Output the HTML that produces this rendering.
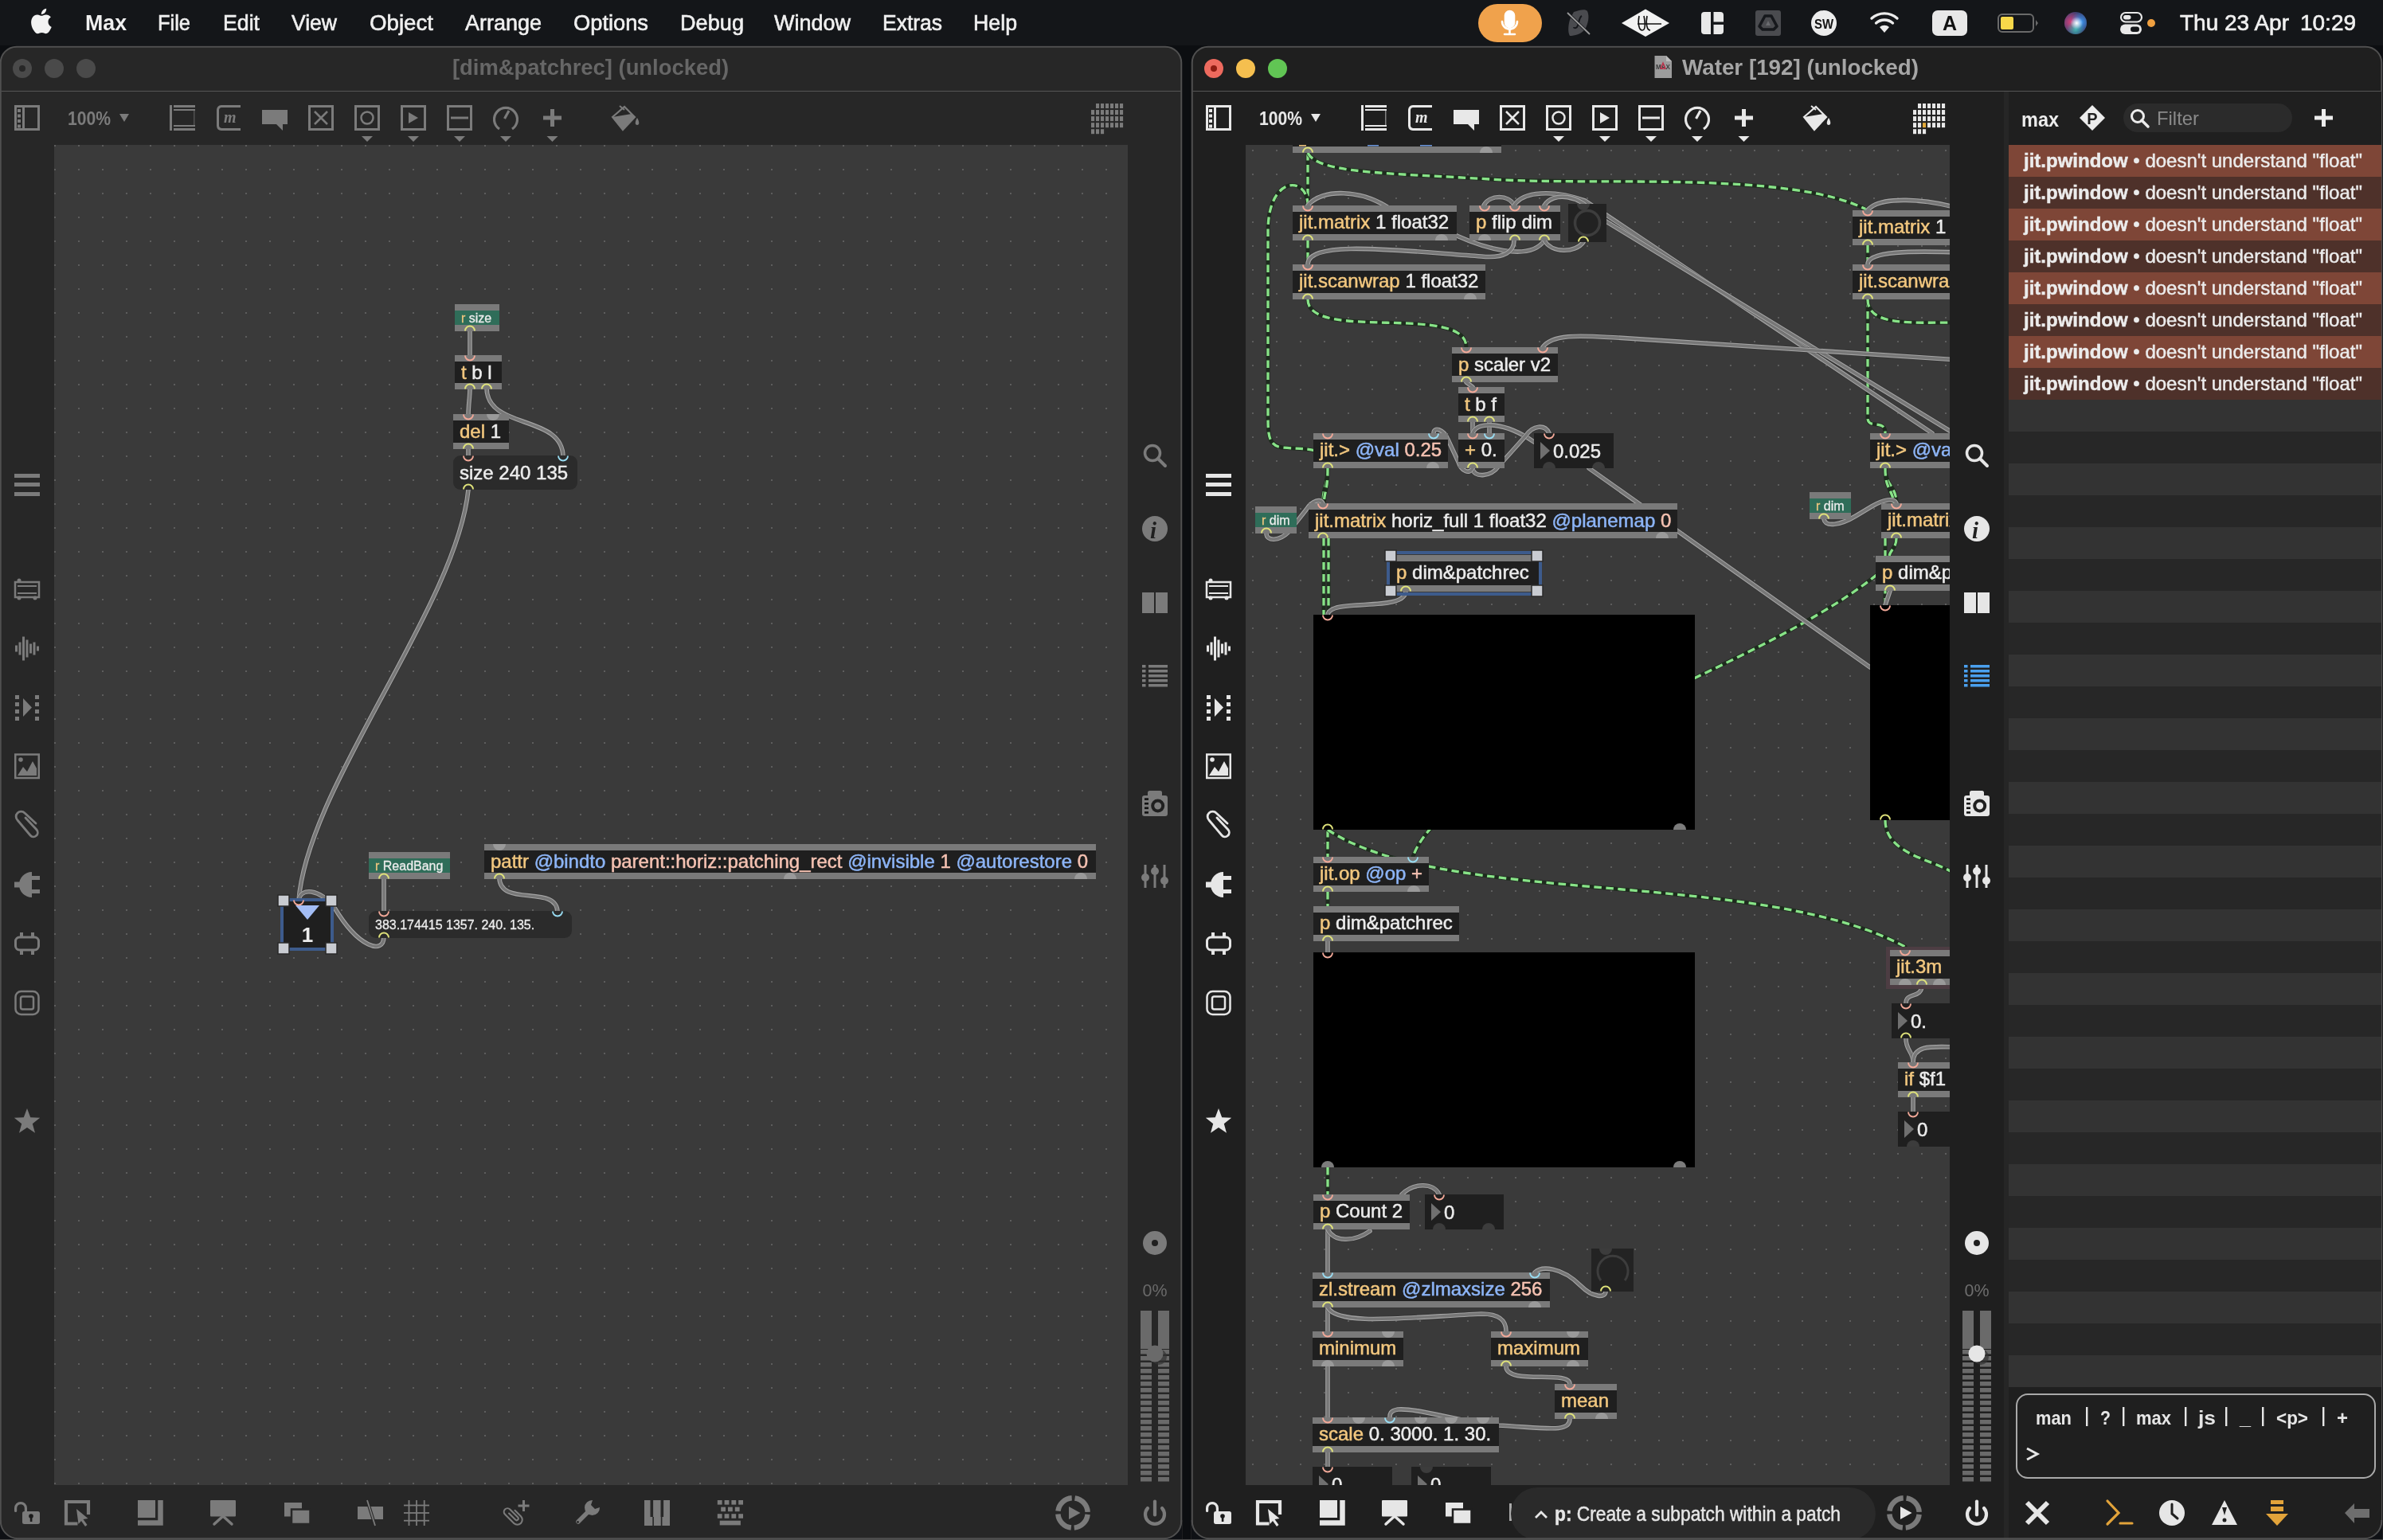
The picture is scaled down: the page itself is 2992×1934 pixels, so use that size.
<!DOCTYPE html>
<html><head><meta charset="utf-8"><style>
html,body{margin:0;padding:0;width:2992px;height:1934px;overflow:hidden;background:#0f1115;}
svg{display:block;font-family:"Liberation Sans", sans-serif;will-change:transform;}
</style></head><body>
<svg width="2992" height="1934" viewBox="0 0 2992 1934">

<rect x="0" y="0" width="2992" height="1934" fill="#0c0e11"/>
<rect x="0" y="0" width="2992" height="57" fill="#141619"/>
<g transform="translate(36.2,10.8) scale(1.31)" fill="#f2f2f2"><path d="M12.152 6.896c-.948 0-2.415-1.078-3.96-1.040-2.04.027-3.91 1.183-4.961 3.014-2.117 3.675-.546 9.103 1.519 12.090 1.013 1.454 2.208 3.090 3.792 3.039 1.520-.065 2.090-.987 3.935-.987 1.831 0 2.350.987 3.960.948 1.637-.026 2.676-1.480 3.676-2.948 1.156-1.688 1.636-3.325 1.662-3.415-.039-.013-3.182-1.221-3.220-4.857-.026-3.040 2.480-4.494 2.597-4.559-1.429-2.090-3.623-2.324-4.390-2.376-2-.156-3.675 1.090-4.610 1.090zM15.530 3.830c.843-1.012 1.400-2.427 1.245-3.830-1.207.052-2.662.805-3.532 1.818-.780.896-1.454 2.338-1.273 3.714 1.338.104 2.715-.688 3.559-1.701"/></g>
<text x="107" y="38" font-size="27" fill="#f0f0f0" font-weight="bold" textLength="52" lengthAdjust="spacingAndGlyphs" >Max</text>
<text x="198" y="38" font-size="27" fill="#f0f0f0" textLength="41" lengthAdjust="spacingAndGlyphs" stroke="#f0f0f0" stroke-width="0.6">File</text>
<text x="280" y="38" font-size="27" fill="#f0f0f0" textLength="46" lengthAdjust="spacingAndGlyphs" stroke="#f0f0f0" stroke-width="0.6">Edit</text>
<text x="366" y="38" font-size="27" fill="#f0f0f0" textLength="57" lengthAdjust="spacingAndGlyphs" stroke="#f0f0f0" stroke-width="0.6">View</text>
<text x="464" y="38" font-size="27" fill="#f0f0f0" textLength="80" lengthAdjust="spacingAndGlyphs" stroke="#f0f0f0" stroke-width="0.6">Object</text>
<text x="584" y="38" font-size="27" fill="#f0f0f0" textLength="96" lengthAdjust="spacingAndGlyphs" stroke="#f0f0f0" stroke-width="0.6">Arrange</text>
<text x="720" y="38" font-size="27" fill="#f0f0f0" textLength="94" lengthAdjust="spacingAndGlyphs" stroke="#f0f0f0" stroke-width="0.6">Options</text>
<text x="854" y="38" font-size="27" fill="#f0f0f0" textLength="80" lengthAdjust="spacingAndGlyphs" stroke="#f0f0f0" stroke-width="0.6">Debug</text>
<text x="972" y="38" font-size="27" fill="#f0f0f0" textLength="96" lengthAdjust="spacingAndGlyphs" stroke="#f0f0f0" stroke-width="0.6">Window</text>
<text x="1108" y="38" font-size="27" fill="#f0f0f0" textLength="75" lengthAdjust="spacingAndGlyphs" stroke="#f0f0f0" stroke-width="0.6">Extras</text>
<text x="1222" y="38" font-size="27" fill="#f0f0f0" textLength="55" lengthAdjust="spacingAndGlyphs" stroke="#f0f0f0" stroke-width="0.6">Help</text>
<rect x="1856" y="5" width="80" height="48" rx="24" fill="#f0a24c"/>
<g fill="none" stroke="#ffffff" stroke-width="2.6" stroke-linecap="round"><rect x="1890" y="14" width="11" height="20" rx="5.5" fill="#ffffff"/><path d="M1886,27 A9.5,9.5 0 0 0 1905,27"/><path d="M1895.5,37 V43 M1889,43 H1902"/></g>
<path d="M1976,15 C1984,12 1991,11 1993,14 C1996,20 1994,30 1990,37 C1985,43 1977,45 1971,45 C1968,40 1969,30 1972,22 Z" fill="#4a4b4f"/><path d="M1986,20 C1982,22 1983,30 1980,34 C1978,36 1976,35 1976,34" fill="none" stroke="#16181c" stroke-width="2"/><path d="M1968,16 L1996,43" stroke="#16181c" stroke-width="3.5"/><path d="M1968,16 L1996,43" stroke="#9a9a9a" stroke-width="1.8"/>
<path d="M2036,29 L2066,11.5 L2096,29 L2066,46 Z" fill="#f2f2f2"/><path d="M2058,20 C2056,30 2058,38 2062,38 C2066,38 2066,30 2064,20 M2068,20 C2066,30 2068,38 2072,38 M2056,30 H2086" fill="none" stroke="#111" stroke-width="1.6"/>
<rect x="2136" y="15" width="28" height="28" rx="4" fill="#e8e8e8"/><rect x="2148" y="15" width="3.5" height="28" fill="#141619"/><rect x="2150" y="27.5" width="14" height="3.4" fill="#141619"/>
<rect x="2204" y="13" width="32" height="32" rx="3" fill="#4a4b4f"/><path d="M2216,20 H2224 L2231,33 L2227,37 H2213 L2209,33 Z" fill="none" stroke="#16181c" stroke-width="3.6" stroke-linejoin="round"/><path d="M2217,32 L2220,26 L2223,32 Z" fill="#6a6b6f"/>
<circle cx="2290" cy="29" r="16" fill="#ececec"/>
<text x="2290" y="36" font-size="17" fill="#111" font-weight="bold" text-anchor="middle" textLength="24" lengthAdjust="spacingAndGlyphs" >SW</text>
<g fill="none" stroke="#ececec" stroke-width="3.4" stroke-linecap="round"><path d="M2350,23 A24,24 0 0 1 2382,23"/><path d="M2355.5,29 A16,16 0 0 1 2376.5,29"/></g><path d="M2360,34 A9,9 0 0 1 2372,34 L2366,41 Z" fill="#ececec"/>
<rect x="2426" y="13" width="44" height="32" rx="7" fill="#e8e8e8"/>
<text x="2448" y="38" font-size="25" fill="#111" font-weight="bold" text-anchor="middle" >A</text>
<rect x="2509" y="18" width="44" height="22" rx="5" fill="none" stroke="#6a6a6a" stroke-width="2"/><rect x="2512" y="21" width="16" height="16" rx="2" fill="#f7d84a"/><path d="M2556,25 L2559,29 L2556,33 Z" fill="#6a6a6a"/>
<defs><radialGradient id="sr1" cx="0.3" cy="0.45" r="0.5"><stop offset="0" stop-color="#e0407a" stop-opacity="0.95"/><stop offset="1" stop-color="#e0407a" stop-opacity="0"/></radialGradient><radialGradient id="sr2" cx="0.72" cy="0.45" r="0.45"><stop offset="0" stop-color="#3aa0ff" stop-opacity="0.95"/><stop offset="1" stop-color="#3aa0ff" stop-opacity="0"/></radialGradient><radialGradient id="sr3" cx="0.5" cy="0.78" r="0.4"><stop offset="0" stop-color="#40d0c0" stop-opacity="0.8"/><stop offset="1" stop-color="#40d0c0" stop-opacity="0"/></radialGradient><radialGradient id="sr4" cx="0.55" cy="0.5" r="0.28"><stop offset="0" stop-color="#ffffff"/><stop offset="1" stop-color="#ffffff" stop-opacity="0"/></radialGradient></defs><circle cx="2606" cy="29" r="14" fill="#3a3f70"/><circle cx="2606" cy="29" r="14" fill="url(#sr1)"/><circle cx="2606" cy="29" r="14" fill="url(#sr2)"/><circle cx="2606" cy="29" r="14" fill="url(#sr3)"/><circle cx="2606" cy="29" r="14" fill="url(#sr4)"/>
<rect x="2663" y="16" width="26" height="11.5" rx="5.75" fill="none" stroke="#e8e8e8" stroke-width="2.2"/><rect x="2666" y="19" width="9.5" height="5.5" rx="2.75" fill="#e8e8e8"/><rect x="2662" y="30.5" width="27" height="12.5" rx="6.25" fill="#e8e8e8"/><rect x="2675" y="33.5" width="11" height="6.5" rx="3.25" fill="#141619"/><circle cx="2701" cy="29" r="5" fill="#f0a040"/>
<text x="2737" y="38" font-size="27" fill="#f0f0f0" textLength="137" lengthAdjust="spacingAndGlyphs" stroke="#f0f0f0" stroke-width="0.6">Thu 23 Apr</text>
<text x="2888" y="38" font-size="27" fill="#f0f0f0" textLength="70" lengthAdjust="spacingAndGlyphs" stroke="#f0f0f0" stroke-width="0.6">10:29</text>
<rect x="0.75" y="58.75" width="1482.5" height="1904" rx="20" fill="#272727" stroke="#505050" stroke-width="2"/>
<rect x="1.5" y="114" width="1481" height="1" fill="#565656"/>
<rect x="1496.75" y="58.75" width="1493.5" height="1904" rx="20" fill="#1f1f1f" stroke="#505050" stroke-width="2"/>
<rect x="1497.5" y="114" width="1492" height="1" fill="#565656"/>
<defs><pattern id="dotsL" x="68" y="182" width="30" height="30" patternUnits="userSpaceOnUse"><rect x="0" y="0" width="2" height="2" fill="#5d5d5d"/></pattern><pattern id="dotsR" x="1572" y="188" width="30" height="30" patternUnits="userSpaceOnUse"><rect x="0" y="0" width="2" height="2" fill="#5d5d5d"/></pattern><clipPath id="clipL"><rect x="68" y="182" width="1348" height="1683"/></clipPath><clipPath id="clipR"><rect x="1564" y="182" width="884" height="1683"/></clipPath></defs>
<g clip-path="url(#clipL)">
<rect x="68" y="182" width="1348" height="1683" fill="#3a3a3a"/>
<rect x="68" y="182" width="1348" height="1683" fill="url(#dotsL)"/>
<path d="M590,414 L590,448" fill="none" stroke="#2e2e2e" stroke-width="7" stroke-linecap="round" opacity="0.35"/>
<path d="M590,414 L590,448" fill="none" stroke="#a4a4a4" stroke-width="5.6" stroke-linecap="round"/>
<path d="M590,414 L590,448" fill="none" stroke="#777777" stroke-width="3.4" stroke-linecap="round"/>
<path d="M590,487 C590,500 588,508 588,522" fill="none" stroke="#2e2e2e" stroke-width="7" stroke-linecap="round" opacity="0.35"/>
<path d="M590,487 C590,500 588,508 588,522" fill="none" stroke="#a4a4a4" stroke-width="5.6" stroke-linecap="round"/>
<path d="M590,487 C590,500 588,508 588,522" fill="none" stroke="#777777" stroke-width="3.4" stroke-linecap="round"/>
<path d="M611,487 C611,540 707,520 707,574" fill="none" stroke="#2e2e2e" stroke-width="7" stroke-linecap="round" opacity="0.35"/>
<path d="M611,487 C611,540 707,520 707,574" fill="none" stroke="#a4a4a4" stroke-width="5.6" stroke-linecap="round"/>
<path d="M611,487 C611,540 707,520 707,574" fill="none" stroke="#777777" stroke-width="3.4" stroke-linecap="round"/>
<path d="M588,562 L588,574" fill="none" stroke="#2e2e2e" stroke-width="7" stroke-linecap="round" opacity="0.35"/>
<path d="M588,562 L588,574" fill="none" stroke="#a4a4a4" stroke-width="5.6" stroke-linecap="round"/>
<path d="M588,562 L588,574" fill="none" stroke="#777777" stroke-width="3.4" stroke-linecap="round"/>
<path d="M588,615 C573,762 386,987 375,1131" fill="none" stroke="#2e2e2e" stroke-width="7" stroke-linecap="round" opacity="0.35"/>
<path d="M588,615 C573,762 386,987 375,1131" fill="none" stroke="#a4a4a4" stroke-width="5.6" stroke-linecap="round"/>
<path d="M588,615 C573,762 386,987 375,1131" fill="none" stroke="#777777" stroke-width="3.4" stroke-linecap="round"/>
<path d="M482,1176 C482,1200 450,1190 420,1140 C400,1115 378,1115 375,1130" fill="none" stroke="#2e2e2e" stroke-width="7" stroke-linecap="round" opacity="0.35"/>
<path d="M482,1176 C482,1200 450,1190 420,1140 C400,1115 378,1115 375,1130" fill="none" stroke="#a4a4a4" stroke-width="5.6" stroke-linecap="round"/>
<path d="M482,1176 C482,1200 450,1190 420,1140 C400,1115 378,1115 375,1130" fill="none" stroke="#777777" stroke-width="3.4" stroke-linecap="round"/>
<path d="M482,1102 L482,1146" fill="none" stroke="#2e2e2e" stroke-width="7" stroke-linecap="round" opacity="0.35"/>
<path d="M482,1102 L482,1146" fill="none" stroke="#a4a4a4" stroke-width="5.6" stroke-linecap="round"/>
<path d="M482,1102 L482,1146" fill="none" stroke="#777777" stroke-width="3.4" stroke-linecap="round"/>
<path d="M627,1102 C627,1140 700,1110 700,1146" fill="none" stroke="#2e2e2e" stroke-width="7" stroke-linecap="round" opacity="0.35"/>
<path d="M627,1102 C627,1140 700,1110 700,1146" fill="none" stroke="#a4a4a4" stroke-width="5.6" stroke-linecap="round"/>
<path d="M627,1102 C627,1140 700,1110 700,1146" fill="none" stroke="#777777" stroke-width="3.4" stroke-linecap="round"/>
<rect x="571" y="382" width="56" height="34" fill="#7a7a7a"/>
<rect x="571" y="390" width="56" height="18" fill="#2f6d59"/>
<text x="579" y="405.0" font-size="16" stroke-width="0.3"><tspan fill="#f2c77f" stroke="#f2c77f">r</tspan><tspan fill="#ececec" stroke="#ececec"> size</tspan></text>
<path d="M584,415.5 A6,6 0 0 1 596,415.5" fill="none" stroke="#dfe27a" stroke-width="1.9"/>
<rect x="571" y="446" width="59" height="43" fill="#7a7a7a"/>
<rect x="571" y="454" width="59" height="27" fill="#1f1f1f"/>
<text x="579" y="475.5" font-size="24" stroke-width="0.5"><tspan fill="#f2c77f" stroke="#f2c77f">t</tspan><tspan fill="#ececec" stroke="#ececec"> b l</tspan></text>
<path d="M584,446.5 A6,6 0 0 0 596,446.5" fill="none" stroke="#f2a898" stroke-width="1.9"/>
<path d="M584,488.5 A6,6 0 0 1 596,488.5" fill="none" stroke="#dfe27a" stroke-width="1.9"/>
<path d="M605,488.5 A6,6 0 0 1 617,488.5" fill="none" stroke="#dfe27a" stroke-width="1.9"/>
<rect x="569" y="520" width="70" height="44" fill="#7a7a7a"/>
<rect x="569" y="528" width="70" height="28" fill="#1f1f1f"/>
<text x="577" y="550" font-size="24" stroke-width="0.5"><tspan fill="#f2c77f" stroke="#f2c77f">del</tspan><tspan fill="#ececec" stroke="#ececec"> 1</tspan></text>
<path d="M582,520.5 A6,6 0 0 0 594,520.5" fill="none" stroke="#f2a898" stroke-width="1.9"/>
<path d="M611,520 A8,8 0 0 0 627,520 Z" fill="#a6a6a6" opacity="0.75"/>
<path d="M582,563.5 A6,6 0 0 1 594,563.5" fill="none" stroke="#dfe27a" stroke-width="1.9"/>
<rect x="569" y="572" width="156" height="43" rx="9" fill="#2b2b2b"/>
<text x="577" y="602" font-size="24" fill="#ececec" stroke="#ececec" stroke-width="0.5">size 240 135</text>
<path d="M582,572.5 A6,6 0 0 0 594,572.5" fill="none" stroke="#f2a898" stroke-width="1.9"/>
<path d="M701,572.5 A6,6 0 0 0 713,572.5" fill="none" stroke="#98dcf2" stroke-width="1.9"/>
<path d="M582,614.5 A6,6 0 0 1 594,614.5" fill="none" stroke="#dfe27a" stroke-width="1.9"/>
<rect x="463" y="1070" width="102" height="34" fill="#7a7a7a"/>
<rect x="463" y="1078" width="102" height="18" fill="#2f6d59"/>
<text x="471" y="1093.0" font-size="16" stroke-width="0.3"><tspan fill="#f2c77f" stroke="#f2c77f">r</tspan><tspan fill="#ececec" stroke="#ececec"> ReadBang</tspan></text>
<path d="M476,1103.5 A6,6 0 0 1 488,1103.5" fill="none" stroke="#dfe27a" stroke-width="1.9"/>
<rect x="463" y="1144" width="255" height="34" rx="9" fill="#2b2b2b"/>
<text x="471" y="1167" font-size="16" fill="#ececec" stroke="#ececec" stroke-width="0.3">383.174415 1357. 240. 135.</text>
<path d="M476,1144.5 A6,6 0 0 0 488,1144.5" fill="none" stroke="#f2a898" stroke-width="1.9"/>
<path d="M694,1144.5 A6,6 0 0 0 706,1144.5" fill="none" stroke="#98dcf2" stroke-width="1.9"/>
<path d="M476,1177.5 A6,6 0 0 1 488,1177.5" fill="none" stroke="#dfe27a" stroke-width="1.9"/>
<rect x="608" y="1060" width="768" height="44" fill="#7a7a7a"/><rect x="608" y="1068" width="768" height="28" fill="#1f1f1f"/>
<text x="616" y="1090" font-size="24" stroke-width="0.5" textLength="750" lengthAdjust="spacingAndGlyphs"><tspan fill="#f2c77f" stroke="#f2c77f">pattr</tspan><tspan fill="#8db5f7" stroke="#8db5f7"> @bindto</tspan><tspan fill="#f5c2b2" stroke="#f5c2b2"> parent::horiz::patching_rect</tspan><tspan fill="#8db5f7" stroke="#8db5f7"> @invisible</tspan><tspan fill="#f5c2b2" stroke="#f5c2b2"> 1</tspan><tspan fill="#8db5f7" stroke="#8db5f7"> @autorestore</tspan><tspan fill="#f5c2b2" stroke="#f5c2b2"> 0</tspan></text>
<path d="M619,1060 A8,8 0 0 0 635,1060 Z" fill="#a6a6a6" opacity="0.75"/>
<path d="M621,1103.5 A6,6 0 0 1 633,1103.5" fill="none" stroke="#dfe27a" stroke-width="1.9"/>
<path d="M984,1104 A8,8 0 0 1 1000,1104 Z" fill="#a6a6a6" opacity="0.75"/>
<path d="M1349,1104 A8,8 0 0 1 1365,1104 Z" fill="#a6a6a6" opacity="0.75"/>
<rect x="354" y="1130" width="63" height="62" fill="#1f1f1f" stroke="#3d5b8c" stroke-width="4"/>
<path d="M371,1137 L401,1137 L386,1155 Z" fill="#a3bdf5"/>
<text x="386" y="1183" font-size="26" fill="#ececec" font-weight="bold" text-anchor="middle" >1</text>
<path d="M369,1130.5 A6,6 0 0 0 381,1130.5" fill="none" stroke="#f2a898" stroke-width="1.9"/>
<rect x="349" y="1124" width="14" height="14" fill="#c9ccd2" stroke="#2a2a2a" stroke-width="1.5"/>
<rect x="409" y="1124" width="14" height="14" fill="#c9ccd2" stroke="#2a2a2a" stroke-width="1.5"/>
<rect x="349" y="1184" width="14" height="14" fill="#c9ccd2" stroke="#2a2a2a" stroke-width="1.5"/>
<rect x="409" y="1184" width="14" height="14" fill="#c9ccd2" stroke="#2a2a2a" stroke-width="1.5"/>
</g>
<g clip-path="url(#clipR)">
<rect x="1564" y="182" width="884" height="1683" fill="#3a3a3a"/>
<rect x="1564" y="182" width="884" height="1683" fill="url(#dotsR)"/>
<path d="M1642,192 L1642,258" fill="none" stroke="#1e2b1e" stroke-width="5" stroke-linecap="round"/>
<path d="M1642,192 L1642,258" fill="none" stroke="#88e388" stroke-width="3.3" stroke-dasharray="9.5 5.5"/>
<path d="M1642,192 C1655,218 1740,217 1875,225.3 S2250,214 2345,264" fill="none" stroke="#1e2b1e" stroke-width="5" stroke-linecap="round"/>
<path d="M1642,192 C1655,218 1740,217 1875,225.3 S2250,214 2345,264" fill="none" stroke="#88e388" stroke-width="3.3" stroke-dasharray="9.5 5.5"/>
<path d="M1667,588 C1667,560 1640,565 1610,562 C1592,560 1592,545 1592,520 L1592,290 C1592,220 1642,220 1642,258" fill="none" stroke="#1e2b1e" stroke-width="5" stroke-linecap="round"/>
<path d="M1667,588 C1667,560 1640,565 1610,562 C1592,560 1592,545 1592,520 L1592,290 C1592,220 1642,220 1642,258" fill="none" stroke="#88e388" stroke-width="3.3" stroke-dasharray="9.5 5.5"/>
<path d="M1642,302 L1642,332" fill="none" stroke="#1e2b1e" stroke-width="5" stroke-linecap="round"/>
<path d="M1642,302 L1642,332" fill="none" stroke="#88e388" stroke-width="3.3" stroke-dasharray="9.5 5.5"/>
<path d="M1642,376 C1642,430 1841,380 1841,436" fill="none" stroke="#1e2b1e" stroke-width="5" stroke-linecap="round"/>
<path d="M1642,376 C1642,430 1841,380 1841,436" fill="none" stroke="#88e388" stroke-width="3.3" stroke-dasharray="9.5 5.5"/>
<path d="M1667,588 C1667,610 1661,610 1661,632" fill="none" stroke="#1e2b1e" stroke-width="5" stroke-linecap="round"/>
<path d="M1667,588 C1667,610 1661,610 1661,632" fill="none" stroke="#88e388" stroke-width="3.3" stroke-dasharray="9.5 5.5"/>
<path d="M1667,588 C1667,615 1664,612 1662,632" fill="none" stroke="#1e2b1e" stroke-width="5" stroke-linecap="round"/>
<path d="M1667,588 C1667,615 1664,612 1662,632" fill="none" stroke="#88e388" stroke-width="3.3" stroke-dasharray="9.5 5.5"/>
<path d="M1662,676 L1662,772" fill="none" stroke="#1e2b1e" stroke-width="5" stroke-linecap="round"/>
<path d="M1662,676 L1662,772" fill="none" stroke="#88e388" stroke-width="3.3" stroke-dasharray="9.5 5.5"/>
<path d="M1668,676 L1668,772" fill="none" stroke="#1e2b1e" stroke-width="5" stroke-linecap="round"/>
<path d="M1668,676 L1668,772" fill="none" stroke="#88e388" stroke-width="3.3" stroke-dasharray="9.5 5.5"/>
<path d="M1667,1042 L1667,1076" fill="none" stroke="#1e2b1e" stroke-width="5" stroke-linecap="round"/>
<path d="M1667,1042 L1667,1076" fill="none" stroke="#88e388" stroke-width="3.3" stroke-dasharray="9.5 5.5"/>
<path d="M1667,1042 C1815,1140 2208,1090 2392,1189" fill="none" stroke="#1e2b1e" stroke-width="5" stroke-linecap="round"/>
<path d="M1667,1042 C1815,1140 2208,1090 2392,1189" fill="none" stroke="#88e388" stroke-width="3.3" stroke-dasharray="9.5 5.5"/>
<path d="M2368,712 C2221,842 1816,954 1774,1076" fill="none" stroke="#1e2b1e" stroke-width="5" stroke-linecap="round"/>
<path d="M2368,712 C2221,842 1816,954 1774,1076" fill="none" stroke="#88e388" stroke-width="3.3" stroke-dasharray="9.5 5.5"/>
<path d="M1667,1120 L1667,1138" fill="none" stroke="#1e2b1e" stroke-width="5" stroke-linecap="round"/>
<path d="M1667,1120 L1667,1138" fill="none" stroke="#88e388" stroke-width="3.3" stroke-dasharray="9.5 5.5"/>
<path d="M1667,1466 L1667,1500" fill="none" stroke="#1e2b1e" stroke-width="5" stroke-linecap="round"/>
<path d="M1667,1466 L1667,1500" fill="none" stroke="#88e388" stroke-width="3.3" stroke-dasharray="9.5 5.5"/>
<path d="M2345,308 L2345,332" fill="none" stroke="#1e2b1e" stroke-width="5" stroke-linecap="round"/>
<path d="M2345,308 L2345,332" fill="none" stroke="#88e388" stroke-width="3.3" stroke-dasharray="9.5 5.5"/>
<path d="M2345,376 L2345,525 C2345,540 2367,525 2367,544" fill="none" stroke="#1e2b1e" stroke-width="5" stroke-linecap="round"/>
<path d="M2345,376 L2345,525 C2345,540 2367,525 2367,544" fill="none" stroke="#88e388" stroke-width="3.3" stroke-dasharray="9.5 5.5"/>
<path d="M2345,376 C2345,410 2400,405 2460,405" fill="none" stroke="#1e2b1e" stroke-width="5" stroke-linecap="round"/>
<path d="M2345,376 C2345,410 2400,405 2460,405" fill="none" stroke="#88e388" stroke-width="3.3" stroke-dasharray="9.5 5.5"/>
<path d="M2367,588 C2367,610 2381,610 2381,632" fill="none" stroke="#1e2b1e" stroke-width="5" stroke-linecap="round"/>
<path d="M2367,588 C2367,610 2381,610 2381,632" fill="none" stroke="#88e388" stroke-width="3.3" stroke-dasharray="9.5 5.5"/>
<path d="M2367,588 C2367,615 2375,612 2378,632" fill="none" stroke="#1e2b1e" stroke-width="5" stroke-linecap="round"/>
<path d="M2367,588 C2367,615 2375,612 2378,632" fill="none" stroke="#88e388" stroke-width="3.3" stroke-dasharray="9.5 5.5"/>
<path d="M2381,676 C2381,688 2374,690 2372,698" fill="none" stroke="#1e2b1e" stroke-width="5" stroke-linecap="round"/>
<path d="M2381,676 C2381,688 2374,690 2372,698" fill="none" stroke="#88e388" stroke-width="3.3" stroke-dasharray="9.5 5.5"/>
<path d="M2367,676 L2367,760" fill="none" stroke="#1e2b1e" stroke-width="5" stroke-linecap="round"/>
<path d="M2367,676 L2367,760" fill="none" stroke="#88e388" stroke-width="3.3" stroke-dasharray="9.5 5.5"/>
<path d="M2367,1030 C2367,1080 2448,1080 2460,1105" fill="none" stroke="#1e2b1e" stroke-width="5" stroke-linecap="round"/>
<path d="M2367,1030 C2367,1080 2448,1080 2460,1105" fill="none" stroke="#88e388" stroke-width="3.3" stroke-dasharray="9.5 5.5"/>
<path d="M1642,258 C1660,236 1710,238 1745,262" fill="none" stroke="#2e2e2e" stroke-width="7" stroke-linecap="round" opacity="0.35"/>
<path d="M1642,258 C1660,236 1710,238 1745,262" fill="none" stroke="#a4a4a4" stroke-width="5.6" stroke-linecap="round"/>
<path d="M1642,258 C1660,236 1710,238 1745,262" fill="none" stroke="#777777" stroke-width="3.4" stroke-linecap="round"/>
<path d="M1863,258 C1870,244 1895,244 1901,258" fill="none" stroke="#2e2e2e" stroke-width="7" stroke-linecap="round" opacity="0.35"/>
<path d="M1863,258 C1870,244 1895,244 1901,258" fill="none" stroke="#a4a4a4" stroke-width="5.6" stroke-linecap="round"/>
<path d="M1863,258 C1870,244 1895,244 1901,258" fill="none" stroke="#777777" stroke-width="3.4" stroke-linecap="round"/>
<path d="M1901,258 C1912,240 1950,238 1990,252 L2426,544" fill="none" stroke="#2e2e2e" stroke-width="7" stroke-linecap="round" opacity="0.35"/>
<path d="M1901,258 C1912,240 1950,238 1990,252 L2426,544" fill="none" stroke="#a4a4a4" stroke-width="5.6" stroke-linecap="round"/>
<path d="M1901,258 C1912,240 1950,238 1990,252 L2426,544" fill="none" stroke="#777777" stroke-width="3.4" stroke-linecap="round"/>
<path d="M1939,258 C1950,240 1985,245 2000,268 L2448,541" fill="none" stroke="#2e2e2e" stroke-width="7" stroke-linecap="round" opacity="0.35"/>
<path d="M1939,258 C1950,240 1985,245 2000,268 L2448,541" fill="none" stroke="#a4a4a4" stroke-width="5.6" stroke-linecap="round"/>
<path d="M1939,258 C1950,240 1985,245 2000,268 L2448,541" fill="none" stroke="#777777" stroke-width="3.4" stroke-linecap="round"/>
<path d="M1829,296 C1860,310 1920,330 1939,302" fill="none" stroke="#2e2e2e" stroke-width="7" stroke-linecap="round" opacity="0.35"/>
<path d="M1829,296 C1860,310 1920,330 1939,302" fill="none" stroke="#a4a4a4" stroke-width="5.6" stroke-linecap="round"/>
<path d="M1829,296 C1860,310 1920,330 1939,302" fill="none" stroke="#777777" stroke-width="3.4" stroke-linecap="round"/>
<path d="M1642,332 C1642,300 1760,315 1860,322 C1890,325 1901,315 1901,302" fill="none" stroke="#2e2e2e" stroke-width="7" stroke-linecap="round" opacity="0.35"/>
<path d="M1642,332 C1642,300 1760,315 1860,322 C1890,325 1901,315 1901,302" fill="none" stroke="#a4a4a4" stroke-width="5.6" stroke-linecap="round"/>
<path d="M1642,332 C1642,300 1760,315 1860,322 C1890,325 1901,315 1901,302" fill="none" stroke="#777777" stroke-width="3.4" stroke-linecap="round"/>
<path d="M1939,302 C1948,318 1978,318 1988,304" fill="none" stroke="#2e2e2e" stroke-width="7" stroke-linecap="round" opacity="0.35"/>
<path d="M1939,302 C1948,318 1978,318 1988,304" fill="none" stroke="#a4a4a4" stroke-width="5.6" stroke-linecap="round"/>
<path d="M1939,302 C1948,318 1978,318 1988,304" fill="none" stroke="#777777" stroke-width="3.4" stroke-linecap="round"/>
<path d="M1937,436 C1950,418 1990,422 2030,424 L2460,452" fill="none" stroke="#2e2e2e" stroke-width="7" stroke-linecap="round" opacity="0.35"/>
<path d="M1937,436 C1950,418 1990,422 2030,424 L2460,452" fill="none" stroke="#a4a4a4" stroke-width="5.6" stroke-linecap="round"/>
<path d="M1937,436 C1950,418 1990,422 2030,424 L2460,452" fill="none" stroke="#777777" stroke-width="3.4" stroke-linecap="round"/>
<path d="M1841,480 L1849,486" fill="none" stroke="#2e2e2e" stroke-width="7" stroke-linecap="round" opacity="0.35"/>
<path d="M1841,480 L1849,486" fill="none" stroke="#a4a4a4" stroke-width="5.6" stroke-linecap="round"/>
<path d="M1841,480 L1849,486" fill="none" stroke="#777777" stroke-width="3.4" stroke-linecap="round"/>
<path d="M1849,530 L1849,544" fill="none" stroke="#2e2e2e" stroke-width="7" stroke-linecap="round" opacity="0.35"/>
<path d="M1849,530 L1849,544" fill="none" stroke="#a4a4a4" stroke-width="5.6" stroke-linecap="round"/>
<path d="M1849,530 L1849,544" fill="none" stroke="#777777" stroke-width="3.4" stroke-linecap="round"/>
<path d="M1870,530 L1870,544" fill="none" stroke="#2e2e2e" stroke-width="7" stroke-linecap="round" opacity="0.35"/>
<path d="M1870,530 L1870,544" fill="none" stroke="#a4a4a4" stroke-width="5.6" stroke-linecap="round"/>
<path d="M1870,530 L1870,544" fill="none" stroke="#777777" stroke-width="3.4" stroke-linecap="round"/>
<path d="M1849,544 C1855,528 1890,530 1926,555" fill="none" stroke="#2e2e2e" stroke-width="7" stroke-linecap="round" opacity="0.35"/>
<path d="M1849,544 C1855,528 1890,530 1926,555" fill="none" stroke="#a4a4a4" stroke-width="5.6" stroke-linecap="round"/>
<path d="M1849,544 C1855,528 1890,530 1926,555" fill="none" stroke="#777777" stroke-width="3.4" stroke-linecap="round"/>
<path d="M1849,588 C1849,600 1872,600 1882,585 L1915,548 C1925,533 1940,533 1945,544" fill="none" stroke="#2e2e2e" stroke-width="7" stroke-linecap="round" opacity="0.35"/>
<path d="M1849,588 C1849,600 1872,600 1882,585 L1915,548 C1925,533 1940,533 1945,544" fill="none" stroke="#a4a4a4" stroke-width="5.6" stroke-linecap="round"/>
<path d="M1849,588 C1849,600 1872,600 1882,585 L1915,548 C1925,533 1940,533 1945,544" fill="none" stroke="#777777" stroke-width="3.4" stroke-linecap="round"/>
<path d="M1849,588 C1845,596 1835,592 1831,580 L1818,552 C1812,538 1800,536 1800,544" fill="none" stroke="#2e2e2e" stroke-width="7" stroke-linecap="round" opacity="0.35"/>
<path d="M1849,588 C1845,596 1835,592 1831,580 L1818,552 C1812,538 1800,536 1800,544" fill="none" stroke="#a4a4a4" stroke-width="5.6" stroke-linecap="round"/>
<path d="M1849,588 C1845,596 1835,592 1831,580 L1818,552 C1812,538 1800,536 1800,544" fill="none" stroke="#777777" stroke-width="3.4" stroke-linecap="round"/>
<path d="M1995,588 L2348,838" fill="none" stroke="#2e2e2e" stroke-width="7" stroke-linecap="round" opacity="0.35"/>
<path d="M1995,588 L2348,838" fill="none" stroke="#a4a4a4" stroke-width="5.6" stroke-linecap="round"/>
<path d="M1995,588 L2348,838" fill="none" stroke="#777777" stroke-width="3.4" stroke-linecap="round"/>
<path d="M1590,670 C1590,680 1606,680 1618,668 L1640,640 C1648,628 1658,626 1661,632" fill="none" stroke="#2e2e2e" stroke-width="7" stroke-linecap="round" opacity="0.35"/>
<path d="M1590,670 C1590,680 1606,680 1618,668 L1640,640 C1648,628 1658,626 1661,632" fill="none" stroke="#a4a4a4" stroke-width="5.6" stroke-linecap="round"/>
<path d="M1590,670 C1590,680 1606,680 1618,668 L1640,640 C1648,628 1658,626 1661,632" fill="none" stroke="#777777" stroke-width="3.4" stroke-linecap="round"/>
<path d="M1765,742 C1765,770 1670,750 1667,772" fill="none" stroke="#2e2e2e" stroke-width="7" stroke-linecap="round" opacity="0.35"/>
<path d="M1765,742 C1765,770 1670,750 1667,772" fill="none" stroke="#a4a4a4" stroke-width="5.6" stroke-linecap="round"/>
<path d="M1765,742 C1765,770 1670,750 1667,772" fill="none" stroke="#777777" stroke-width="3.4" stroke-linecap="round"/>
<path d="M1667,1182 L1667,1196" fill="none" stroke="#2e2e2e" stroke-width="7" stroke-linecap="round" opacity="0.35"/>
<path d="M1667,1182 L1667,1196" fill="none" stroke="#a4a4a4" stroke-width="5.6" stroke-linecap="round"/>
<path d="M1667,1182 L1667,1196" fill="none" stroke="#777777" stroke-width="3.4" stroke-linecap="round"/>
<path d="M1667,1544 L1667,1598" fill="none" stroke="#2e2e2e" stroke-width="7" stroke-linecap="round" opacity="0.35"/>
<path d="M1667,1544 L1667,1598" fill="none" stroke="#a4a4a4" stroke-width="5.6" stroke-linecap="round"/>
<path d="M1667,1544 L1667,1598" fill="none" stroke="#777777" stroke-width="3.4" stroke-linecap="round"/>
<path d="M1667,1544 C1675,1560 1700,1560 1720,1546" fill="none" stroke="#2e2e2e" stroke-width="7" stroke-linecap="round" opacity="0.35"/>
<path d="M1667,1544 C1675,1560 1700,1560 1720,1546" fill="none" stroke="#a4a4a4" stroke-width="5.6" stroke-linecap="round"/>
<path d="M1667,1544 C1675,1560 1700,1560 1720,1546" fill="none" stroke="#777777" stroke-width="3.4" stroke-linecap="round"/>
<path d="M1760,1500 C1775,1485 1800,1485 1807,1500" fill="none" stroke="#2e2e2e" stroke-width="7" stroke-linecap="round" opacity="0.35"/>
<path d="M1760,1500 C1775,1485 1800,1485 1807,1500" fill="none" stroke="#a4a4a4" stroke-width="5.6" stroke-linecap="round"/>
<path d="M1760,1500 C1775,1485 1800,1485 1807,1500" fill="none" stroke="#777777" stroke-width="3.4" stroke-linecap="round"/>
<path d="M1667,1642 L1667,1672" fill="none" stroke="#2e2e2e" stroke-width="7" stroke-linecap="round" opacity="0.35"/>
<path d="M1667,1642 L1667,1672" fill="none" stroke="#a4a4a4" stroke-width="5.6" stroke-linecap="round"/>
<path d="M1667,1642 L1667,1672" fill="none" stroke="#777777" stroke-width="3.4" stroke-linecap="round"/>
<path d="M1667,1642 C1680,1665 1760,1655 1860,1650 C1885,1650 1891,1660 1891,1672" fill="none" stroke="#2e2e2e" stroke-width="7" stroke-linecap="round" opacity="0.35"/>
<path d="M1667,1642 C1680,1665 1760,1655 1860,1650 C1885,1650 1891,1660 1891,1672" fill="none" stroke="#a4a4a4" stroke-width="5.6" stroke-linecap="round"/>
<path d="M1667,1642 C1680,1665 1760,1655 1860,1650 C1885,1650 1891,1660 1891,1672" fill="none" stroke="#777777" stroke-width="3.4" stroke-linecap="round"/>
<path d="M1927,1598 C1935,1590 1960,1590 1985,1615 C2000,1630 2016,1630 2016,1622" fill="none" stroke="#2e2e2e" stroke-width="7" stroke-linecap="round" opacity="0.35"/>
<path d="M1927,1598 C1935,1590 1960,1590 1985,1615 C2000,1630 2016,1630 2016,1622" fill="none" stroke="#a4a4a4" stroke-width="5.6" stroke-linecap="round"/>
<path d="M1927,1598 C1935,1590 1960,1590 1985,1615 C2000,1630 2016,1630 2016,1622" fill="none" stroke="#777777" stroke-width="3.4" stroke-linecap="round"/>
<path d="M1667,1716 L1667,1780" fill="none" stroke="#2e2e2e" stroke-width="7" stroke-linecap="round" opacity="0.35"/>
<path d="M1667,1716 L1667,1780" fill="none" stroke="#a4a4a4" stroke-width="5.6" stroke-linecap="round"/>
<path d="M1667,1716 L1667,1780" fill="none" stroke="#777777" stroke-width="3.4" stroke-linecap="round"/>
<path d="M1891,1716 C1891,1740 1971,1720 1971,1738" fill="none" stroke="#2e2e2e" stroke-width="7" stroke-linecap="round" opacity="0.35"/>
<path d="M1891,1716 C1891,1740 1971,1720 1971,1738" fill="none" stroke="#a4a4a4" stroke-width="5.6" stroke-linecap="round"/>
<path d="M1891,1716 C1891,1740 1971,1720 1971,1738" fill="none" stroke="#777777" stroke-width="3.4" stroke-linecap="round"/>
<path d="M1971,1782 C1971,1800 1940,1793 1880,1790 C1830,1785 1780,1768 1755,1770 C1745,1772 1745,1776 1745,1780" fill="none" stroke="#2e2e2e" stroke-width="7" stroke-linecap="round" opacity="0.35"/>
<path d="M1971,1782 C1971,1800 1940,1793 1880,1790 C1830,1785 1780,1768 1755,1770 C1745,1772 1745,1776 1745,1780" fill="none" stroke="#a4a4a4" stroke-width="5.6" stroke-linecap="round"/>
<path d="M1971,1782 C1971,1800 1940,1793 1880,1790 C1830,1785 1780,1768 1755,1770 C1745,1772 1745,1776 1745,1780" fill="none" stroke="#777777" stroke-width="3.4" stroke-linecap="round"/>
<path d="M1667,1824 L1667,1842" fill="none" stroke="#2e2e2e" stroke-width="7" stroke-linecap="round" opacity="0.35"/>
<path d="M1667,1824 L1667,1842" fill="none" stroke="#a4a4a4" stroke-width="5.6" stroke-linecap="round"/>
<path d="M1667,1824 L1667,1842" fill="none" stroke="#777777" stroke-width="3.4" stroke-linecap="round"/>
<path d="M2413,1237 C2413,1255 2393,1245 2393,1260" fill="none" stroke="#2e2e2e" stroke-width="7" stroke-linecap="round" opacity="0.35"/>
<path d="M2413,1237 C2413,1255 2393,1245 2393,1260" fill="none" stroke="#a4a4a4" stroke-width="5.6" stroke-linecap="round"/>
<path d="M2413,1237 C2413,1255 2393,1245 2393,1260" fill="none" stroke="#777777" stroke-width="3.4" stroke-linecap="round"/>
<path d="M2393,1304 C2393,1320 2402,1320 2402,1334" fill="none" stroke="#2e2e2e" stroke-width="7" stroke-linecap="round" opacity="0.35"/>
<path d="M2393,1304 C2393,1320 2402,1320 2402,1334" fill="none" stroke="#a4a4a4" stroke-width="5.6" stroke-linecap="round"/>
<path d="M2393,1304 C2393,1320 2402,1320 2402,1334" fill="none" stroke="#777777" stroke-width="3.4" stroke-linecap="round"/>
<path d="M2402,1334 C2402,1310 2430,1315 2460,1315" fill="none" stroke="#2e2e2e" stroke-width="7" stroke-linecap="round" opacity="0.35"/>
<path d="M2402,1334 C2402,1310 2430,1315 2460,1315" fill="none" stroke="#a4a4a4" stroke-width="5.6" stroke-linecap="round"/>
<path d="M2402,1334 C2402,1310 2430,1315 2460,1315" fill="none" stroke="#777777" stroke-width="3.4" stroke-linecap="round"/>
<path d="M2402,1378 L2402,1396" fill="none" stroke="#2e2e2e" stroke-width="7" stroke-linecap="round" opacity="0.35"/>
<path d="M2402,1378 L2402,1396" fill="none" stroke="#a4a4a4" stroke-width="5.6" stroke-linecap="round"/>
<path d="M2402,1378 L2402,1396" fill="none" stroke="#777777" stroke-width="3.4" stroke-linecap="round"/>
<path d="M2290,652 C2292,662 2310,660 2330,648 L2350,636 C2365,627 2378,625 2381,632" fill="none" stroke="#2e2e2e" stroke-width="7" stroke-linecap="round" opacity="0.35"/>
<path d="M2290,652 C2292,662 2310,660 2330,648 L2350,636 C2365,627 2378,625 2381,632" fill="none" stroke="#a4a4a4" stroke-width="5.6" stroke-linecap="round"/>
<path d="M2290,652 C2292,662 2310,660 2330,648 L2350,636 C2365,627 2378,625 2381,632" fill="none" stroke="#777777" stroke-width="3.4" stroke-linecap="round"/>
<path d="M2373,742 L2367,760" fill="none" stroke="#2e2e2e" stroke-width="7" stroke-linecap="round" opacity="0.35"/>
<path d="M2373,742 L2367,760" fill="none" stroke="#a4a4a4" stroke-width="5.6" stroke-linecap="round"/>
<path d="M2373,742 L2367,760" fill="none" stroke="#777777" stroke-width="3.4" stroke-linecap="round"/>
<path d="M2345,264 C2360,245 2420,250 2460,262" fill="none" stroke="#2e2e2e" stroke-width="7" stroke-linecap="round" opacity="0.35"/>
<path d="M2345,264 C2360,245 2420,250 2460,262" fill="none" stroke="#a4a4a4" stroke-width="5.6" stroke-linecap="round"/>
<path d="M2345,264 C2360,245 2420,250 2460,262" fill="none" stroke="#777777" stroke-width="3.4" stroke-linecap="round"/>
<path d="M2345,332 C2345,315 2400,315 2460,317" fill="none" stroke="#2e2e2e" stroke-width="7" stroke-linecap="round" opacity="0.35"/>
<path d="M2345,332 C2345,315 2400,315 2460,317" fill="none" stroke="#a4a4a4" stroke-width="5.6" stroke-linecap="round"/>
<path d="M2345,332 C2345,315 2400,315 2460,317" fill="none" stroke="#777777" stroke-width="3.4" stroke-linecap="round"/>
<rect x="1623" y="150" width="262" height="42" fill="#7a7a7a"/>
<rect x="1623" y="158" width="262" height="26" fill="#1f1f1f"/>
<path d="M1636,191.5 A6,6 0 0 1 1648,191.5" fill="none" stroke="#dfe27a" stroke-width="1.9"/>
<path d="M1858,192 A8,8 0 0 1 1874,192 Z" fill="#a6a6a6" opacity="0.75"/>
<rect x="1631" y="182" width="9" height="1.5" fill="#f2c77f"/><rect x="1717" y="182" width="14" height="1.5" fill="#6f9ae0"/><rect x="1783" y="182" width="15" height="1.5" fill="#6f9ae0"/>
<rect x="1623" y="258" width="206" height="44" fill="#7a7a7a"/>
<rect x="1623" y="266" width="206" height="28" fill="#1f1f1f"/>
<text x="1631" y="287" font-size="24" stroke-width="0.5"><tspan fill="#f2c77f" stroke="#f2c77f">jit.matrix</tspan><tspan fill="#ececec" stroke="#ececec"> 1 float32</tspan></text>
<path d="M1636,258.5 A6,6 0 0 0 1648,258.5" fill="none" stroke="#f2a898" stroke-width="1.9"/>
<path d="M1636,301.5 A6,6 0 0 1 1648,301.5" fill="none" stroke="#dfe27a" stroke-width="1.9"/>
<path d="M1802,302 A8,8 0 0 1 1818,302 Z" fill="#a6a6a6" opacity="0.75"/>
<rect x="1845" y="258" width="114" height="44" fill="#7a7a7a"/>
<rect x="1845" y="266" width="114" height="28" fill="#1f1f1f"/>
<text x="1853" y="287" font-size="24" stroke-width="0.5"><tspan fill="#f2c77f" stroke="#f2c77f">p</tspan><tspan fill="#ececec" stroke="#ececec"> flip dim</tspan></text>
<path d="M1858,258.5 A6,6 0 0 0 1870,258.5" fill="none" stroke="#f2a898" stroke-width="1.9"/>
<path d="M1896,258.5 A6,6 0 0 0 1908,258.5" fill="none" stroke="#f2a898" stroke-width="1.9"/>
<path d="M1933,258.5 A6,6 0 0 0 1945,258.5" fill="none" stroke="#f2a898" stroke-width="1.9"/>
<path d="M1856,302 A8,8 0 0 1 1872,302 Z" fill="#a6a6a6" opacity="0.75"/>
<path d="M1896,301.5 A6,6 0 0 1 1908,301.5" fill="none" stroke="#dfe27a" stroke-width="1.9"/>
<path d="M1933,301.5 A6,6 0 0 1 1945,301.5" fill="none" stroke="#dfe27a" stroke-width="1.9"/>
<rect x="1969" y="256" width="48" height="48" fill="#222222"/>
<circle cx="1993" cy="280" r="15.5" fill="none" stroke="#3d3d3d" stroke-width="3.5"/>
<path d="M1980,256 A8,8 0 0 0 1996,256 Z" fill="#3c3c3c"/>
<path d="M1982,303.5 A6,6 0 0 1 1994,303.5" fill="none" stroke="#dfe27a" stroke-width="1.9"/>
<rect x="1623" y="332" width="242" height="44" fill="#7a7a7a"/>
<rect x="1623" y="340" width="242" height="28" fill="#1f1f1f"/>
<text x="1631" y="361" font-size="24" stroke-width="0.5"><tspan fill="#f2c77f" stroke="#f2c77f">jit.scanwrap</tspan><tspan fill="#ececec" stroke="#ececec"> 1 float32</tspan></text>
<path d="M1636,332.5 A6,6 0 0 0 1648,332.5" fill="none" stroke="#f2a898" stroke-width="1.9"/>
<path d="M1636,375.5 A6,6 0 0 1 1648,375.5" fill="none" stroke="#dfe27a" stroke-width="1.9"/>
<path d="M1838,376 A8,8 0 0 1 1854,376 Z" fill="#a6a6a6" opacity="0.75"/>
<rect x="1823" y="436" width="133" height="44" fill="#7a7a7a"/>
<rect x="1823" y="444" width="133" height="28" fill="#1f1f1f"/>
<text x="1831" y="465.5" font-size="24" stroke-width="0.5"><tspan fill="#f2c77f" stroke="#f2c77f">p</tspan><tspan fill="#ececec" stroke="#ececec"> scaler v2</tspan></text>
<path d="M1835,436.5 A6,6 0 0 0 1847,436.5" fill="none" stroke="#f2a898" stroke-width="1.9"/>
<path d="M1931,436.5 A6,6 0 0 0 1943,436.5" fill="none" stroke="#f2a898" stroke-width="1.9"/>
<path d="M1835,479.5 A6,6 0 0 1 1847,479.5" fill="none" stroke="#dfe27a" stroke-width="1.9"/>
<rect x="1831" y="486" width="58" height="44" fill="#7a7a7a"/>
<rect x="1831" y="494" width="58" height="28" fill="#1f1f1f"/>
<text x="1839" y="515.5" font-size="24" stroke-width="0.5"><tspan fill="#f2c77f" stroke="#f2c77f">t</tspan><tspan fill="#ececec" stroke="#ececec"> b f</tspan></text>
<path d="M1843,486.5 A6,6 0 0 0 1855,486.5" fill="none" stroke="#f2a898" stroke-width="1.9"/>
<path d="M1843,529.5 A6,6 0 0 1 1855,529.5" fill="none" stroke="#dfe27a" stroke-width="1.9"/>
<path d="M1864,529.5 A6,6 0 0 1 1876,529.5" fill="none" stroke="#dfe27a" stroke-width="1.9"/>
<rect x="1649" y="544" width="169" height="44" fill="#7a7a7a"/>
<rect x="1649" y="552" width="169" height="28" fill="#1f1f1f"/>
<text x="1657" y="572.5" font-size="24" stroke-width="0.5"><tspan fill="#f2c77f" stroke="#f2c77f">jit.&gt;</tspan><tspan fill="#8db5f7" stroke="#8db5f7"> @val</tspan><tspan fill="#f5c2b2" stroke="#f5c2b2"> 0.25</tspan></text>
<path d="M1661,544.5 A6,6 0 0 0 1673,544.5" fill="none" stroke="#f2a898" stroke-width="1.9"/>
<path d="M1794,544.5 A6,6 0 0 0 1806,544.5" fill="none" stroke="#98dcf2" stroke-width="1.9"/>
<path d="M1661,587.5 A6,6 0 0 1 1673,587.5" fill="none" stroke="#dfe27a" stroke-width="1.9"/>
<path d="M1791,588 A8,8 0 0 1 1807,588 Z" fill="#a6a6a6" opacity="0.75"/>
<rect x="1831" y="544" width="58" height="44" fill="#7a7a7a"/>
<rect x="1831" y="552" width="58" height="28" fill="#1f1f1f"/>
<text x="1839" y="572.5" font-size="24" stroke-width="0.5"><tspan fill="#f2c77f" stroke="#f2c77f">+</tspan><tspan fill="#ececec" stroke="#ececec"> 0.</tspan></text>
<path d="M1843,544.5 A6,6 0 0 0 1855,544.5" fill="none" stroke="#f2a898" stroke-width="1.9"/>
<path d="M1864,544.5 A6,6 0 0 0 1876,544.5" fill="none" stroke="#98dcf2" stroke-width="1.9"/>
<path d="M1843,587.5 A6,6 0 0 1 1855,587.5" fill="none" stroke="#dfe27a" stroke-width="1.9"/>
<rect x="1926" y="544" width="100" height="44" fill="#1f1f1f"/>
<path d="M1934,555.0 L1946,566.0 L1934,577.0 Z" fill="#707070"/>
<text x="1950" y="575.0" font-size="24" fill="#ececec" stroke="#ececec" stroke-width="0.5">0.025</text>
<path d="M1939,544.5 A6,6 0 0 0 1951,544.5" fill="none" stroke="#f2a898" stroke-width="1.9"/>
<path d="M1937,588 A8,8 0 0 1 1953,588 Z" fill="#3c3c3c"/>
<path d="M1999,588 A8,8 0 0 1 2015,588 Z" fill="#3c3c3c"/>
<rect x="1576" y="636" width="52" height="34" fill="#7a7a7a"/>
<rect x="1576" y="644" width="52" height="18" fill="#2f6d59"/>
<text x="1584" y="659.0" font-size="16" stroke-width="0.3"><tspan fill="#f2c77f" stroke="#f2c77f">r</tspan><tspan fill="#ececec" stroke="#ececec"> dim</tspan></text>
<path d="M1584,669.5 A6,6 0 0 1 1596,669.5" fill="none" stroke="#dfe27a" stroke-width="1.9"/>
<rect x="1643" y="632" width="463" height="44" fill="#7a7a7a"/>
<rect x="1643" y="640" width="463" height="28" fill="#1f1f1f"/>
<text x="1651" y="661.5" font-size="24" stroke-width="0.5"><tspan fill="#f2c77f" stroke="#f2c77f">jit.matrix</tspan><tspan fill="#ececec" stroke="#ececec"> horiz_full 1 float32</tspan><tspan fill="#8db5f7" stroke="#8db5f7"> @planemap</tspan><tspan fill="#f5c2b2" stroke="#f5c2b2"> 0</tspan></text>
<path d="M1655,632.5 A6,6 0 0 0 1667,632.5" fill="none" stroke="#f2a898" stroke-width="1.9"/>
<path d="M1655,675.5 A6,6 0 0 1 1667,675.5" fill="none" stroke="#dfe27a" stroke-width="1.9"/>
<path d="M2079,676 A8,8 0 0 1 2095,676 Z" fill="#a6a6a6" opacity="0.75"/>
<rect x="1743" y="694" width="191" height="52" fill="none" stroke="#3d5b8c" stroke-width="4"/>
<rect x="1745" y="697" width="187" height="46" fill="#7a7a7a"/>
<rect x="1745" y="705" width="187" height="30" fill="#1f1f1f"/>
<text x="1753" y="727" font-size="24" stroke-width="0.5"><tspan fill="#f2c77f" stroke="#f2c77f">p</tspan><tspan fill="#ececec" stroke="#ececec"> dim&amp;patchrec</tspan></text>
<path d="M1759,742.5 A6,6 0 0 1 1771,742.5" fill="none" stroke="#dfe27a" stroke-width="1.9"/>
<rect x="1739" y="691" width="14" height="14" fill="#c9ccd2" stroke="#2a2a2a" stroke-width="1.5"/>
<rect x="1923" y="691" width="14" height="14" fill="#c9ccd2" stroke="#2a2a2a" stroke-width="1.5"/>
<rect x="1739" y="735" width="14" height="14" fill="#c9ccd2" stroke="#2a2a2a" stroke-width="1.5"/>
<rect x="1923" y="735" width="14" height="14" fill="#c9ccd2" stroke="#2a2a2a" stroke-width="1.5"/>
<rect x="1649" y="772" width="479" height="270" fill="#000000"/>
<path d="M1661,772.5 A6,6 0 0 0 1673,772.5" fill="none" stroke="#f2a898" stroke-width="1.9"/>
<path d="M1661,1041.5 A6,6 0 0 1 1673,1041.5" fill="none" stroke="#dfe27a" stroke-width="1.9"/>
<path d="M2101,1042 A8,8 0 0 1 2117,1042 Z" fill="#a6a6a6" opacity="0.75"/>
<rect x="1649" y="1076" width="145" height="44" fill="#7a7a7a"/>
<rect x="1649" y="1084" width="145" height="28" fill="#1f1f1f"/>
<text x="1657" y="1104.5" font-size="24" stroke-width="0.5"><tspan fill="#f2c77f" stroke="#f2c77f">jit.op</tspan><tspan fill="#8db5f7" stroke="#8db5f7"> @op</tspan><tspan fill="#f5c2b2" stroke="#f5c2b2"> +</tspan></text>
<path d="M1661,1076.5 A6,6 0 0 0 1673,1076.5" fill="none" stroke="#f2a898" stroke-width="1.9"/>
<path d="M1768,1076.5 A6,6 0 0 0 1780,1076.5" fill="none" stroke="#98dcf2" stroke-width="1.9"/>
<path d="M1661,1119.5 A6,6 0 0 1 1673,1119.5" fill="none" stroke="#dfe27a" stroke-width="1.9"/>
<path d="M1767,1120 A8,8 0 0 1 1783,1120 Z" fill="#a6a6a6" opacity="0.75"/>
<rect x="1649" y="1138" width="183" height="44" fill="#7a7a7a"/>
<rect x="1649" y="1146" width="183" height="28" fill="#1f1f1f"/>
<text x="1657" y="1167" font-size="24" stroke-width="0.5"><tspan fill="#f2c77f" stroke="#f2c77f">p</tspan><tspan fill="#ececec" stroke="#ececec"> dim&amp;patchrec</tspan></text>
<path d="M1661,1181.5 A6,6 0 0 1 1673,1181.5" fill="none" stroke="#dfe27a" stroke-width="1.9"/>
<rect x="1649" y="1196" width="479" height="270" fill="#000000"/>
<path d="M1661,1196.5 A6,6 0 0 0 1673,1196.5" fill="none" stroke="#f2a898" stroke-width="1.9"/>
<path d="M1659,1466 A8,8 0 0 1 1675,1466 Z" fill="#a6a6a6" opacity="0.75"/>
<path d="M2101,1466 A8,8 0 0 1 2117,1466 Z" fill="#a6a6a6" opacity="0.75"/>
<rect x="1649" y="1500" width="121" height="44" fill="#7a7a7a"/>
<rect x="1649" y="1508" width="121" height="28" fill="#1f1f1f"/>
<text x="1657" y="1529" font-size="24" stroke-width="0.5"><tspan fill="#f2c77f" stroke="#f2c77f">p</tspan><tspan fill="#ececec" stroke="#ececec"> Count 2</tspan></text>
<path d="M1661,1500.5 A6,6 0 0 0 1673,1500.5" fill="none" stroke="#f2a898" stroke-width="1.9"/>
<path d="M1661,1543.5 A6,6 0 0 1 1673,1543.5" fill="none" stroke="#dfe27a" stroke-width="1.9"/>
<rect x="1789" y="1500" width="99" height="44" fill="#1f1f1f"/>
<path d="M1797,1511.0 L1809,1522.0 L1797,1533.0 Z" fill="#707070"/>
<text x="1813" y="1531.0" font-size="24" fill="#ececec" stroke="#ececec" stroke-width="0.5">0</text>
<path d="M1801,1500.5 A6,6 0 0 0 1813,1500.5" fill="none" stroke="#f2a898" stroke-width="1.9"/>
<path d="M1799,1544 A8,8 0 0 1 1815,1544 Z" fill="#3c3c3c"/>
<path d="M1861,1544 A8,8 0 0 1 1877,1544 Z" fill="#3c3c3c"/>
<rect x="1998" y="1568" width="53" height="54" fill="#232323"/>
<path d="M2010,1608 A19,19 0 1 1 2040,1608" fill="none" stroke="#3d3d3d" stroke-width="3"/>
<path d="M2008,1568 A8,8 0 0 0 2024,1568 Z" fill="#3c3c3c"/>
<path d="M2010,1621.5 A6,6 0 0 1 2022,1621.5" fill="none" stroke="#dfe27a" stroke-width="1.9"/>
<rect x="1648" y="1598" width="298" height="44" fill="#7a7a7a"/>
<rect x="1648" y="1606" width="298" height="28" fill="#1f1f1f"/>
<text x="1656" y="1627" font-size="24" stroke-width="0.5"><tspan fill="#f2c77f" stroke="#f2c77f">zl.stream</tspan><tspan fill="#8db5f7" stroke="#8db5f7"> @zlmaxsize</tspan><tspan fill="#f5c2b2" stroke="#f5c2b2"> 256</tspan></text>
<path d="M1661,1598.5 A6,6 0 0 0 1673,1598.5" fill="none" stroke="#98dcf2" stroke-width="1.9"/>
<path d="M1921,1598.5 A6,6 0 0 0 1933,1598.5" fill="none" stroke="#98dcf2" stroke-width="1.9"/>
<path d="M1661,1641.5 A6,6 0 0 1 1673,1641.5" fill="none" stroke="#dfe27a" stroke-width="1.9"/>
<path d="M1919,1642 A8,8 0 0 1 1935,1642 Z" fill="#a6a6a6" opacity="0.75"/>
<rect x="1648" y="1672" width="114" height="44" fill="#7a7a7a"/>
<rect x="1648" y="1680" width="114" height="28" fill="#1f1f1f"/>
<text x="1656" y="1701" font-size="24" stroke-width="0.5"><tspan fill="#f2c77f" stroke="#f2c77f">minimum</tspan></text>
<path d="M1661,1672.5 A6,6 0 0 0 1673,1672.5" fill="none" stroke="#f2a898" stroke-width="1.9"/>
<path d="M1735,1672 A8,8 0 0 0 1751,1672 Z" fill="#a6a6a6" opacity="0.75"/>
<path d="M1659,1716 A8,8 0 0 1 1675,1716 Z" fill="#a6a6a6" opacity="0.75"/>
<path d="M1735,1716 A8,8 0 0 1 1751,1716 Z" fill="#a6a6a6" opacity="0.75"/>
<rect x="1872" y="1672" width="122" height="44" fill="#7a7a7a"/>
<rect x="1872" y="1680" width="122" height="28" fill="#1f1f1f"/>
<text x="1880" y="1701" font-size="24" stroke-width="0.5"><tspan fill="#f2c77f" stroke="#f2c77f">maximum</tspan></text>
<path d="M1885,1672.5 A6,6 0 0 0 1897,1672.5" fill="none" stroke="#f2a898" stroke-width="1.9"/>
<path d="M1967,1672 A8,8 0 0 0 1983,1672 Z" fill="#a6a6a6" opacity="0.75"/>
<path d="M1885,1715.5 A6,6 0 0 1 1897,1715.5" fill="none" stroke="#dfe27a" stroke-width="1.9"/>
<path d="M1967,1716 A8,8 0 0 1 1983,1716 Z" fill="#a6a6a6" opacity="0.75"/>
<rect x="1952" y="1738" width="78" height="44" fill="#7a7a7a"/>
<rect x="1952" y="1746" width="78" height="28" fill="#1f1f1f"/>
<text x="1960" y="1767" font-size="24" stroke-width="0.5"><tspan fill="#f2c77f" stroke="#f2c77f">mean</tspan></text>
<path d="M1965,1738.5 A6,6 0 0 0 1977,1738.5" fill="none" stroke="#f2a898" stroke-width="1.9"/>
<path d="M1965,1781.5 A6,6 0 0 1 1977,1781.5" fill="none" stroke="#dfe27a" stroke-width="1.9"/>
<path d="M2003,1782 A8,8 0 0 1 2019,1782 Z" fill="#a6a6a6" opacity="0.75"/>
<rect x="1648" y="1780" width="234" height="44" fill="#7a7a7a"/>
<rect x="1648" y="1788" width="234" height="28" fill="#1f1f1f"/>
<text x="1656" y="1809" font-size="24" stroke-width="0.5"><tspan fill="#f2c77f" stroke="#f2c77f">scale</tspan><tspan fill="#ececec" stroke="#ececec"> 0. 3000. 1. 30.</tspan></text>
<path d="M1661,1780.5 A6,6 0 0 0 1673,1780.5" fill="none" stroke="#f2a898" stroke-width="1.9"/>
<path d="M1698,1780 A8,8 0 0 0 1714,1780 Z" fill="#a6a6a6" opacity="0.75"/>
<path d="M1739,1780.5 A6,6 0 0 0 1751,1780.5" fill="none" stroke="#98dcf2" stroke-width="1.9"/>
<path d="M1776,1780 A8,8 0 0 0 1792,1780 Z" fill="#a6a6a6" opacity="0.75"/>
<path d="M1814,1780 A8,8 0 0 0 1830,1780 Z" fill="#a6a6a6" opacity="0.75"/>
<path d="M1854,1780 A8,8 0 0 0 1870,1780 Z" fill="#a6a6a6" opacity="0.75"/>
<path d="M1661,1823.5 A6,6 0 0 1 1673,1823.5" fill="none" stroke="#dfe27a" stroke-width="1.9"/>
<rect x="1648" y="1842" width="100" height="44" fill="#1f1f1f"/>
<path d="M1656,1853.0 L1668,1864.0 L1656,1875.0 Z" fill="#707070"/>
<text x="1672" y="1873.0" font-size="24" fill="#ececec" stroke="#ececec" stroke-width="0.5">0</text>
<path d="M1661,1842.5 A6,6 0 0 0 1673,1842.5" fill="none" stroke="#f2a898" stroke-width="1.9"/>
<rect x="1772" y="1842" width="100" height="44" fill="#1f1f1f"/>
<path d="M1780,1853.0 L1792,1864.0 L1780,1875.0 Z" fill="#707070"/>
<text x="1796" y="1873.0" font-size="24" fill="#ececec" stroke="#ececec" stroke-width="0.5">0</text>
<path d="M1783,1842 A8,8 0 0 0 1799,1842 Z" fill="#3c3c3c"/>
<rect x="2326" y="264" width="144" height="44" fill="#7a7a7a"/>
<rect x="2326" y="272" width="144" height="28" fill="#1f1f1f"/>
<text x="2334" y="293" font-size="24" stroke-width="0.5"><tspan fill="#f2c77f" stroke="#f2c77f">jit.matrix</tspan><tspan fill="#ececec" stroke="#ececec"> 1</tspan></text>
<path d="M2339,264.5 A6,6 0 0 0 2351,264.5" fill="none" stroke="#f2a898" stroke-width="1.9"/>
<path d="M2339,307.5 A6,6 0 0 1 2351,307.5" fill="none" stroke="#dfe27a" stroke-width="1.9"/>
<rect x="2326" y="332" width="144" height="44" fill="#7a7a7a"/>
<rect x="2326" y="340" width="144" height="28" fill="#1f1f1f"/>
<text x="2334" y="361" font-size="24" stroke-width="0.5"><tspan fill="#f2c77f" stroke="#f2c77f">jit.scanwrap</tspan></text>
<path d="M2339,332.5 A6,6 0 0 0 2351,332.5" fill="none" stroke="#f2a898" stroke-width="1.9"/>
<path d="M2339,375.5 A6,6 0 0 1 2351,375.5" fill="none" stroke="#dfe27a" stroke-width="1.9"/>
<rect x="2348" y="544" width="122" height="44" fill="#7a7a7a"/>
<rect x="2348" y="552" width="122" height="28" fill="#1f1f1f"/>
<text x="2356" y="573" font-size="24" stroke-width="0.5"><tspan fill="#f2c77f" stroke="#f2c77f">jit.&gt;</tspan><tspan fill="#8db5f7" stroke="#8db5f7"> @val</tspan></text>
<path d="M2361,544.5 A6,6 0 0 0 2373,544.5" fill="none" stroke="#f2a898" stroke-width="1.9"/>
<path d="M2361,587.5 A6,6 0 0 1 2373,587.5" fill="none" stroke="#dfe27a" stroke-width="1.9"/>
<rect x="2272" y="618" width="52" height="34" fill="#7a7a7a"/>
<rect x="2272" y="626" width="52" height="18" fill="#2f6d59"/>
<text x="2280" y="641.0" font-size="16" stroke-width="0.3"><tspan fill="#f2c77f" stroke="#f2c77f">r</tspan><tspan fill="#ececec" stroke="#ececec"> dim</tspan></text>
<path d="M2284,651.5 A6,6 0 0 1 2296,651.5" fill="none" stroke="#dfe27a" stroke-width="1.9"/>
<rect x="2362" y="632" width="108" height="44" fill="#7a7a7a"/>
<rect x="2362" y="640" width="108" height="28" fill="#1f1f1f"/>
<text x="2370" y="661" font-size="24" stroke-width="0.5"><tspan fill="#f2c77f" stroke="#f2c77f">jit.matrix</tspan></text>
<path d="M2375,632.5 A6,6 0 0 0 2387,632.5" fill="none" stroke="#f2a898" stroke-width="1.9"/>
<path d="M2375,675.5 A6,6 0 0 1 2387,675.5" fill="none" stroke="#dfe27a" stroke-width="1.9"/>
<rect x="2355" y="698" width="115" height="44" fill="#7a7a7a"/>
<rect x="2355" y="706" width="115" height="28" fill="#1f1f1f"/>
<text x="2363" y="727" font-size="24" stroke-width="0.5"><tspan fill="#f2c77f" stroke="#f2c77f">p</tspan><tspan fill="#ececec" stroke="#ececec"> dim&amp;patchrec</tspan></text>
<path d="M2367,741.5 A6,6 0 0 1 2379,741.5" fill="none" stroke="#dfe27a" stroke-width="1.9"/>
<rect x="2348" y="760" width="120" height="270" fill="#000000"/>
<path d="M2361,760.5 A6,6 0 0 0 2373,760.5" fill="none" stroke="#f2a898" stroke-width="1.9"/>
<path d="M2361,1029.5 A6,6 0 0 1 2373,1029.5" fill="none" stroke="#dfe27a" stroke-width="1.9"/>
<rect x="2368" y="1189" width="100" height="53" fill="#4d3d43"/>
<rect x="2373" y="1193" width="97" height="44" fill="#7a7a7a"/>
<rect x="2373" y="1201" width="97" height="28" fill="#1f1f1f"/>
<text x="2381" y="1222" font-size="24" stroke-width="0.5"><tspan fill="#f2c77f" stroke="#f2c77f">jit.3m</tspan></text>
<path d="M2386,1193.5 A6,6 0 0 0 2398,1193.5" fill="none" stroke="#f2a898" stroke-width="1.9"/>
<path d="M2384,1237 A8,8 0 0 1 2400,1237 Z" fill="#a6a6a6" opacity="0.75"/>
<path d="M2407,1236.5 A6,6 0 0 1 2419,1236.5" fill="none" stroke="#dfe27a" stroke-width="1.9"/>
<path d="M2427,1237 A8,8 0 0 1 2443,1237 Z" fill="#a6a6a6" opacity="0.75"/>
<rect x="2375" y="1260" width="95" height="44" fill="#1f1f1f"/>
<path d="M2383,1271.0 L2395,1282.0 L2383,1293.0 Z" fill="#707070"/>
<text x="2399" y="1291.0" font-size="24" fill="#ececec" stroke="#ececec" stroke-width="0.5">0.</text>
<path d="M2387,1260.5 A6,6 0 0 0 2399,1260.5" fill="none" stroke="#f2a898" stroke-width="1.9"/>
<path d="M2387,1303.5 A6,6 0 0 1 2399,1303.5" fill="none" stroke="#dfe27a" stroke-width="1.9"/>
<rect x="2383" y="1334" width="87" height="44" fill="#7a7a7a"/>
<rect x="2383" y="1342" width="87" height="28" fill="#1f1f1f"/>
<text x="2391" y="1363" font-size="24" stroke-width="0.5"><tspan fill="#f2c77f" stroke="#f2c77f">if</tspan><tspan fill="#ececec" stroke="#ececec"> $f1</tspan></text>
<path d="M2396,1334.5 A6,6 0 0 0 2408,1334.5" fill="none" stroke="#f2a898" stroke-width="1.9"/>
<path d="M2396,1377.5 A6,6 0 0 1 2408,1377.5" fill="none" stroke="#dfe27a" stroke-width="1.9"/>
<rect x="2383" y="1396" width="87" height="44" fill="#1f1f1f"/>
<path d="M2391,1407.0 L2403,1418.0 L2391,1429.0 Z" fill="#707070"/>
<text x="2407" y="1427.0" font-size="24" fill="#ececec" stroke="#ececec" stroke-width="0.5">0</text>
<path d="M2396,1396.5 A6,6 0 0 0 2408,1396.5" fill="none" stroke="#f2a898" stroke-width="1.9"/>
<path d="M2394,1440 A8,8 0 0 1 2410,1440 Z" fill="#3c3c3c"/>
</g>
<circle cx="28" cy="86" r="12" fill="#4a4a4a"/>
<circle cx="28" cy="86" r="4" fill="#272727"/>
<circle cx="68" cy="86" r="12" fill="#4a4a4a"/>
<circle cx="108" cy="86" r="12" fill="#4a4a4a"/>
<text x="568" y="93.5" font-size="28" fill="#666666" font-weight="bold" textLength="347" lengthAdjust="spacingAndGlyphs" >[dim&amp;patchrec] (unlocked)</text>
<rect x="19.5" y="133.5" width="29" height="29" fill="none" stroke="#7b7b7b" stroke-width="3"/>
<rect x="28" y="132" width="3" height="32" fill="#7b7b7b"/>
<rect x="22" y="137.0" width="4" height="4" fill="#7b7b7b"/>
<rect x="22" y="143.5" width="4" height="4" fill="#7b7b7b"/>
<rect x="22" y="150.0" width="4" height="4" fill="#7b7b7b"/>
<rect x="22" y="156.5" width="4" height="4" fill="#7b7b7b"/>
<text x="85" y="157" font-size="24" fill="#7b7b7b" font-weight="bold" textLength="54" lengthAdjust="spacingAndGlyphs" >100%</text>
<path d="M150,143 L162,143 L156,153 Z" fill="#7b7b7b"/>
<rect x="213" y="132" width="3" height="32" fill="#7b7b7b"/>
<rect x="218" y="132" width="27" height="3" fill="#7b7b7b"/><rect x="218" y="137" width="27" height="2" fill="#7b7b7b"/>
<rect x="218" y="157" width="27" height="2" fill="#7b7b7b"/><rect x="218" y="161" width="27" height="3" fill="#7b7b7b"/>
<rect x="243" y="137" width="1.5" height="22" fill="#7b7b7b" opacity="0.5"/>
<path d="M302,133.5 H278 A5,5 0 0 0 273.5,138 V158 A5,5 0 0 0 278,162.5 H302" fill="none" stroke="#7b7b7b" stroke-width="3"/>
<text x="281" y="154" font-size="20" font-style="italic" font-weight="bold" font-family="Liberation Serif" fill="#7b7b7b">m</text>
<path d="M329,138 H361 V156 H355 V164 L347,156 H329 Z" fill="#7b7b7b"/>
<rect x="388.5" y="133.5" width="29" height="29" fill="none" stroke="#7b7b7b" stroke-width="3"/>
<path d="M395,140 L411,156 M411,140 L395,156" stroke="#7b7b7b" stroke-width="2.5"/>
<rect x="446.5" y="133.5" width="29" height="29" fill="none" stroke="#7b7b7b" stroke-width="3"/>
<circle cx="461" cy="148" r="7.5" fill="none" stroke="#7b7b7b" stroke-width="2.5"/>
<path d="M454,171 L468,171 L461,178 Z" fill="#7b7b7b"/>
<rect x="504.5" y="133.5" width="29" height="29" fill="none" stroke="#7b7b7b" stroke-width="3"/>
<path d="M513,141 L525,148 L513,155 Z" fill="#7b7b7b"/>
<path d="M512,171 L526,171 L519,178 Z" fill="#7b7b7b"/>
<rect x="562.5" y="133.5" width="29" height="29" fill="none" stroke="#7b7b7b" stroke-width="3"/>
<rect x="566" y="146.5" width="22" height="3" fill="#7b7b7b"/>
<path d="M570,171 L584,171 L577,178 Z" fill="#7b7b7b"/>
<path d="M627,162 A14.5,14.5 0 1 1 643,162" fill="none" stroke="#7b7b7b" stroke-width="3.2"/>
<path d="M633.5,149 L639,139" stroke="#7b7b7b" stroke-width="3.2"/>
<path d="M628,171 L642,171 L635,178 Z" fill="#7b7b7b"/>
<rect x="682" y="145.5" width="23" height="5" fill="#7b7b7b"/><rect x="691" y="137" width="5" height="22" fill="#7b7b7b"/>
<path d="M686.5,171 L700.5,171 L693.5,178 Z" fill="#7b7b7b"/>
<path d="M769,147 L784,134 L797,147 L782,163 Z" fill="none" stroke="#7b7b7b" stroke-width="2.2"/>
<path d="M769,147 L793,143 L797,147 L782,163 Z" fill="#7b7b7b"/>
<path d="M778,133 L784,138" stroke="#7b7b7b" stroke-width="2"/>
<path d="M800,148 C797,153 797,157 800,157 C803,157 803,153 800,148 Z" fill="#7b7b7b"/>
<rect x="1376.0" y="130.0" width="4.1" height="6" fill="#7b7b7b"/>
<rect x="1382.0" y="130.0" width="4.1" height="6" fill="#7b7b7b"/>
<rect x="1388.0" y="130.0" width="4.1" height="6" fill="#7b7b7b"/>
<rect x="1394.0" y="130.0" width="4.1" height="6" fill="#7b7b7b"/>
<rect x="1400.0" y="130.0" width="4.1" height="6" fill="#7b7b7b"/>
<rect x="1406.0" y="130.0" width="4.1" height="6" fill="#7b7b7b"/>
<rect x="1370.0" y="138.05" width="4.1" height="6" fill="#7b7b7b"/>
<rect x="1376.0" y="138.05" width="4.1" height="6" fill="#7b7b7b"/>
<rect x="1382.0" y="138.05" width="4.1" height="6" fill="#7b7b7b"/>
<rect x="1388.0" y="138.05" width="4.1" height="6" fill="#7b7b7b"/>
<rect x="1394.0" y="138.05" width="4.1" height="6" fill="#7b7b7b"/>
<rect x="1400.0" y="138.05" width="4.1" height="6" fill="#7b7b7b"/>
<rect x="1406.0" y="138.05" width="4.1" height="6" fill="#7b7b7b"/>
<rect x="1370.0" y="146.1" width="4.1" height="6" fill="#7b7b7b"/>
<rect x="1376.0" y="146.1" width="4.1" height="6" fill="#7b7b7b"/>
<rect x="1382.0" y="146.1" width="4.1" height="6" fill="#7b7b7b"/>
<rect x="1388.0" y="146.1" width="4.1" height="6" fill="#7b7b7b"/>
<rect x="1394.0" y="146.1" width="4.1" height="6" fill="#7b7b7b"/>
<rect x="1400.0" y="146.1" width="4.1" height="6" fill="#7b7b7b"/>
<rect x="1406.0" y="146.1" width="4.1" height="6" fill="#7b7b7b"/>
<rect x="1370.0" y="154.15" width="4.1" height="6" fill="#7b7b7b"/>
<rect x="1376.0" y="154.15" width="4.1" height="6" fill="#7b7b7b"/>
<rect x="1382.0" y="154.15" width="4.1" height="6" fill="#7b7b7b"/>
<rect x="1388.0" y="154.15" width="4.1" height="6" fill="#7b7b7b"/>
<rect x="1394.0" y="154.15" width="4.1" height="6" fill="#7b7b7b"/>
<rect x="1400.0" y="154.15" width="4.1" height="6" fill="#7b7b7b"/>
<rect x="1406.0" y="154.15" width="4.1" height="6" fill="#7b7b7b"/>
<rect x="1370.0" y="162.2" width="4.1" height="6" fill="#7b7b7b"/>
<rect x="1376.0" y="162.2" width="4.1" height="6" fill="#7b7b7b"/>
<rect x="1382.0" y="162.2" width="4.1" height="6" fill="#7b7b7b"/>
<rect x="18" y="595" width="32" height="5" fill="#7b7b7b"/>
<rect x="18" y="606" width="32" height="5" fill="#7b7b7b"/>
<rect x="18" y="618" width="32" height="5" fill="#7b7b7b"/>
<rect x="19" y="731" width="30" height="19" fill="none" stroke="#7b7b7b" stroke-width="2.5"/>
<rect x="22" y="735" width="24" height="2" fill="#7b7b7b"/><rect x="22" y="744" width="24" height="2" fill="#7b7b7b"/>
<circle cx="24" cy="729" r="2.5" fill="#7b7b7b"/><circle cx="24" cy="751" r="2.5" fill="#7b7b7b"/><circle cx="44" cy="751" r="2.5" fill="#7b7b7b"/>
<rect x="19.0" y="810.5" width="3" height="8" fill="#7b7b7b"/>
<rect x="23.5" y="806.5" width="3" height="16" fill="#7b7b7b"/>
<rect x="28.0" y="799.5" width="3" height="30" fill="#7b7b7b"/>
<rect x="32.5" y="803.5" width="3" height="22" fill="#7b7b7b"/>
<rect x="37.0" y="808.5" width="3" height="12" fill="#7b7b7b"/>
<rect x="41.5" y="806.5" width="3" height="16" fill="#7b7b7b"/>
<rect x="46.0" y="811.5" width="3" height="6" fill="#7b7b7b"/>
<rect x="19" y="873" width="5" height="5" fill="#7b7b7b"/><rect x="44" y="873" width="5" height="5" fill="#7b7b7b"/>
<rect x="19" y="882" width="5" height="5" fill="#7b7b7b"/><rect x="44" y="882" width="5" height="5" fill="#7b7b7b"/>
<rect x="19" y="891" width="5" height="5" fill="#7b7b7b"/><rect x="44" y="891" width="5" height="5" fill="#7b7b7b"/>
<rect x="19" y="900" width="5" height="5" fill="#7b7b7b"/><rect x="44" y="900" width="5" height="5" fill="#7b7b7b"/>
<path d="M29,877 L40,888.5 L29,900 Z" fill="#7b7b7b"/>
<rect x="19.25" y="947.5" width="29.5" height="29.5" fill="none" stroke="#7b7b7b" stroke-width="2.5"/>
<circle cx="26" cy="954" r="2.8" fill="#7b7b7b"/>
<path d="M22,974 L29,963 L34,969 L41,956 L46,965 V974 Z" fill="#7b7b7b"/>
<path d="M45,1034 L31,1021 A6,6 0 0 0 22,1030 L38,1049 A5,5 0 0 0 46,1042 L32,1027" fill="none" stroke="#7b7b7b" stroke-width="2.8" stroke-linecap="round"/>
<path d="M40,1095 A16,16 0 0 0 40,1127 Z" fill="#7b7b7b"/>
<rect x="18" y="1107.5" width="8" height="7" fill="#7b7b7b"/>
<rect x="38" y="1100" width="12" height="5" fill="#7b7b7b"/><rect x="38" y="1117" width="12" height="5" fill="#7b7b7b"/>
<rect x="19.5" y="1177" width="29" height="16" rx="5" fill="none" stroke="#7b7b7b" stroke-width="3"/>
<rect x="25" y="1171" width="4" height="6" fill="#7b7b7b"/><rect x="39" y="1171" width="4" height="6" fill="#7b7b7b"/>
<rect x="25" y="1193" width="4" height="6" fill="#7b7b7b"/><rect x="39" y="1193" width="4" height="6" fill="#7b7b7b"/>
<rect x="19.5" y="1245" width="29" height="29" rx="7" fill="none" stroke="#7b7b7b" stroke-width="2.5"/>
<rect x="26" y="1251.5" width="16" height="16" rx="2.5" fill="none" stroke="#7b7b7b" stroke-width="2.5"/>
<path d="M34.0,1392.0 L38.2,1403.2 L50.2,1403.7 L40.8,1411.2 L44.0,1422.8 L34.0,1416.1 L24.0,1422.8 L27.2,1411.2 L17.8,1403.7 L29.8,1403.2 Z" fill="#7b7b7b"/>
<circle cx="1447" cy="569" r="9.5" fill="none" stroke="#7b7b7b" stroke-width="3.5"/>
<path d="M1454,576 L1463,585" stroke="#7b7b7b" stroke-width="4" stroke-linecap="round"/>
<circle cx="1450" cy="664" r="16" fill="#7b7b7b"/>
<text x="1444" y="676" font-size="29" font-weight="bold" font-style="italic" font-family="Liberation Serif" fill="#1f1f1f">i</text>
<rect x="1434" y="744" width="15" height="26" fill="#7b7b7b"/><rect x="1451" y="744" width="15" height="26" fill="#7b7b7b"/>
<rect x="1434" y="835" width="4.5" height="3.5" fill="#7b7b7b"/><rect x="1442" y="835" width="24" height="3.5" fill="#7b7b7b"/>
<rect x="1434" y="841" width="4.5" height="3.5" fill="#7b7b7b"/><rect x="1442" y="841" width="24" height="3.5" fill="#7b7b7b"/>
<rect x="1434" y="847" width="4.5" height="3.5" fill="#7b7b7b"/><rect x="1442" y="847" width="24" height="3.5" fill="#7b7b7b"/>
<rect x="1434" y="853" width="4.5" height="3.5" fill="#7b7b7b"/><rect x="1442" y="853" width="24" height="3.5" fill="#7b7b7b"/>
<rect x="1434" y="859" width="4.5" height="3.5" fill="#7b7b7b"/><rect x="1442" y="859" width="24" height="3.5" fill="#7b7b7b"/>
<path d="M1441,999 V995.5 A2.5,2.5 0 0 1 1443.5,993 H1456.5 A2.5,2.5 0 0 1 1459,995.5 V999 H1463 A3,3 0 0 1 1466,1002 V1022 A3,3 0 0 1 1463,1025 H1437 A3,3 0 0 1 1434,1022 V1002 A3,3 0 0 1 1437,999 Z" fill="#7b7b7b"/>
<circle cx="1453.7" cy="1012" r="6.5" fill="none" stroke="#1f1f1f" stroke-width="4"/>
<rect x="1437" y="1002.3000000000001" width="5" height="2.6" fill="#111"/>
<rect x="1437" y="1007.9000000000001" width="5" height="2.6" fill="#111"/>
<rect x="1437" y="1013.5" width="5" height="2.6" fill="#111"/>
<rect x="1437" y="1019.1" width="5" height="2.6" fill="#111"/>
<rect x="1436.5" y="1086" width="3" height="29" fill="#7b7b7b"/><circle cx="1438" cy="1102" r="5" fill="#7b7b7b"/>
<rect x="1448.5" y="1086" width="3" height="29" fill="#7b7b7b"/><circle cx="1450" cy="1094" r="5" fill="#7b7b7b"/>
<rect x="1460.5" y="1086" width="3" height="29" fill="#7b7b7b"/><circle cx="1462" cy="1106" r="5" fill="#7b7b7b"/>
<circle cx="1450" cy="1561" r="15" fill="#7b7b7b"/><circle cx="1450" cy="1561" r="4" fill="#1f1f1f"/>
<text x="1450" y="1628" font-size="22" fill="#6a6a6a" text-anchor="middle" textLength="31" lengthAdjust="spacingAndGlyphs" >0%</text>
<rect x="1432" y="1646" width="14" height="48" fill="#6a6a6a"/>
<rect x="1432" y="1695" width="14" height="5.5" fill="#6a6a6a"/>
<rect x="1432" y="1703" width="14" height="5.5" fill="#6a6a6a"/>
<rect x="1432" y="1711" width="14" height="5.5" fill="#6a6a6a"/>
<rect x="1432" y="1719" width="14" height="5.5" fill="#6a6a6a"/>
<rect x="1432" y="1727" width="14" height="5.5" fill="#6a6a6a"/>
<rect x="1432" y="1735" width="14" height="5.5" fill="#6a6a6a"/>
<rect x="1432" y="1743" width="14" height="5.5" fill="#6a6a6a"/>
<rect x="1432" y="1751" width="14" height="5.5" fill="#6a6a6a"/>
<rect x="1432" y="1759" width="14" height="5.5" fill="#6a6a6a"/>
<rect x="1432" y="1767" width="14" height="5.5" fill="#6a6a6a"/>
<rect x="1432" y="1775" width="14" height="5.5" fill="#6a6a6a"/>
<rect x="1432" y="1783" width="14" height="5.5" fill="#6a6a6a"/>
<rect x="1432" y="1791" width="14" height="5.5" fill="#6a6a6a"/>
<rect x="1432" y="1799" width="14" height="5.5" fill="#6a6a6a"/>
<rect x="1432" y="1807" width="14" height="5.5" fill="#6a6a6a"/>
<rect x="1432" y="1815" width="14" height="5.5" fill="#6a6a6a"/>
<rect x="1432" y="1823" width="14" height="5.5" fill="#6a6a6a"/>
<rect x="1432" y="1831" width="14" height="5.5" fill="#6a6a6a"/>
<rect x="1432" y="1839" width="14" height="5.5" fill="#6a6a6a"/>
<rect x="1432" y="1847" width="14" height="5.5" fill="#6a6a6a"/>
<rect x="1432" y="1855" width="14" height="5.5" fill="#6a6a6a"/>
<rect x="1454" y="1646" width="14" height="48" fill="#6a6a6a"/>
<rect x="1454" y="1695" width="14" height="5.5" fill="#6a6a6a"/>
<rect x="1454" y="1703" width="14" height="5.5" fill="#6a6a6a"/>
<rect x="1454" y="1711" width="14" height="5.5" fill="#6a6a6a"/>
<rect x="1454" y="1719" width="14" height="5.5" fill="#6a6a6a"/>
<rect x="1454" y="1727" width="14" height="5.5" fill="#6a6a6a"/>
<rect x="1454" y="1735" width="14" height="5.5" fill="#6a6a6a"/>
<rect x="1454" y="1743" width="14" height="5.5" fill="#6a6a6a"/>
<rect x="1454" y="1751" width="14" height="5.5" fill="#6a6a6a"/>
<rect x="1454" y="1759" width="14" height="5.5" fill="#6a6a6a"/>
<rect x="1454" y="1767" width="14" height="5.5" fill="#6a6a6a"/>
<rect x="1454" y="1775" width="14" height="5.5" fill="#6a6a6a"/>
<rect x="1454" y="1783" width="14" height="5.5" fill="#6a6a6a"/>
<rect x="1454" y="1791" width="14" height="5.5" fill="#6a6a6a"/>
<rect x="1454" y="1799" width="14" height="5.5" fill="#6a6a6a"/>
<rect x="1454" y="1807" width="14" height="5.5" fill="#6a6a6a"/>
<rect x="1454" y="1815" width="14" height="5.5" fill="#6a6a6a"/>
<rect x="1454" y="1823" width="14" height="5.5" fill="#6a6a6a"/>
<rect x="1454" y="1831" width="14" height="5.5" fill="#6a6a6a"/>
<rect x="1454" y="1839" width="14" height="5.5" fill="#6a6a6a"/>
<rect x="1454" y="1847" width="14" height="5.5" fill="#6a6a6a"/>
<rect x="1454" y="1855" width="14" height="5.5" fill="#6a6a6a"/>
<circle cx="1455" cy="1704" r="10" fill="#333" opacity="0.7"/>
<circle cx="1450" cy="1700" r="10.5" fill="#6a6a6a"/>
<path d="M1441,1894 A12,12 0 1 0 1459,1894" fill="none" stroke="#7b7b7b" stroke-width="4.2" stroke-linecap="round"/>
<path d="M1450,1885.5 V1902.5" stroke="#7b7b7b" stroke-width="4.2" stroke-linecap="round"/>
<path d="M19.6,1897.5 V1894 A6.4,6.4 0 0 1 32.4,1894 V1899" fill="none" stroke="#7b7b7b" stroke-width="3.2" stroke-linecap="round"/>
<rect x="28" y="1898" width="22" height="16" rx="2.5" fill="#7b7b7b"/><circle cx="39" cy="1904" r="2.8" fill="#1a1a1a"/><rect x="37.8" y="1904" width="2.6" height="7" fill="#1a1a1a"/>
<path d="M97.5,1913.5 H83 V1886 H111 V1902" fill="none" stroke="#7b7b7b" stroke-width="4.2"/>
<path d="M96,1895 L110.5,1907 L104.5,1908 L109.5,1915 L107,1917 L102,1910 L98.5,1914 Z" fill="#7b7b7b"/>
<rect x="173" y="1884" width="22" height="22" fill="#7b7b7b"/><path d="M201.5,1884 V1912.5 H173" fill="none" stroke="#7b7b7b" stroke-width="6.5"/>
<rect x="264" y="1884" width="32" height="20.5" rx="1" fill="#7b7b7b"/><path d="M280,1904 L269,1914 M280,1904 L291,1914" stroke="#7b7b7b" stroke-width="3.5" stroke-linecap="round"/>
<rect x="357" y="1887" width="22" height="17.5" fill="#7b7b7b"/><rect x="366" y="1895.5" width="23.5" height="18.5" fill="#7b7b7b" stroke="#272727" stroke-width="2.5"/>
<rect x="449" y="1892" width="32" height="16" fill="#7b7b7b"/><path d="M461,1884 L471,1916" stroke="#272727" stroke-width="4"/><path d="M461,1884 L471,1916" stroke="#7b7b7b" stroke-width="1.8"/>
<rect x="512.6" y="1884" width="1.8" height="32" fill="#7b7b7b"/><rect x="507" y="1889.6" width="32" height="1.8" fill="#7b7b7b"/>
<rect x="522.1" y="1884" width="1.8" height="32" fill="#7b7b7b"/><rect x="507" y="1899.1" width="32" height="1.8" fill="#7b7b7b"/>
<rect x="531.8000000000001" y="1884" width="1.8" height="32" fill="#7b7b7b"/><rect x="507" y="1908.8" width="32" height="1.8" fill="#7b7b7b"/>
<g transform="translate(644,1903) rotate(-45) scale(0.88)"><path d="M-2,-6 V7 A2.5,2.5 0 0 0 3,7 V-9 A5,5 0 0 0 -7,-9 V9 A7,7 0 0 0 7,9 V-3" fill="none" stroke="#7b7b7b" stroke-width="2.4" stroke-linecap="round"/></g>
<rect x="650.5" y="1889.5" width="14" height="3" fill="#7b7b7b"/><rect x="656" y="1884" width="3" height="14" fill="#7b7b7b"/>
<path d="M726,1911 L739,1898" stroke="#7b7b7b" stroke-width="5.5" stroke-linecap="round"/>
<path d="M744,1884 A9.5,9.5 0 1 0 753,1893 L747,1895 L742,1890 Z" fill="#7b7b7b"/>
<circle cx="725.5" cy="1911.5" r="1.4" fill="#272727"/>
<rect x="809" y="1884" width="32" height="32" fill="#7b7b7b"/>
<rect x="816.5" y="1884" width="3.6" height="21" fill="#272727"/><rect x="829.5" y="1884" width="3.6" height="21" fill="#272727"/>
<rect x="819.3" y="1905" width="1.6" height="11" fill="#272727"/><rect x="829.8" y="1905" width="1.6" height="11" fill="#272727"/>
<rect x="900.8" y="1884.0" width="5.8" height="5.6" fill="#7b7b7b"/>
<rect x="909.5999999999999" y="1884.0" width="5.8" height="5.6" fill="#7b7b7b"/>
<rect x="918.4" y="1884.0" width="5.8" height="5.6" fill="#7b7b7b"/>
<rect x="927.1999999999999" y="1884.0" width="5.8" height="5.6" fill="#7b7b7b"/>
<rect x="905.1999999999999" y="1892.6" width="5.8" height="5.6" fill="#7b7b7b"/>
<rect x="914.0" y="1892.6" width="5.8" height="5.6" fill="#7b7b7b"/>
<rect x="922.8" y="1892.6" width="5.8" height="5.6" fill="#7b7b7b"/>
<rect x="900.8" y="1901.2" width="5.8" height="5.6" fill="#7b7b7b"/>
<rect x="909.5999999999999" y="1901.2" width="5.8" height="5.6" fill="#7b7b7b"/>
<rect x="918.4" y="1901.2" width="5.8" height="5.6" fill="#7b7b7b"/>
<rect x="927.1999999999999" y="1901.2" width="5.8" height="5.6" fill="#7b7b7b"/>
<rect x="903.7" y="1909.7" width="26.2" height="5.7" fill="#7b7b7b"/>
<circle cx="1347" cy="1900" r="18.7" fill="none" stroke="#7b7b7b" stroke-width="6.5" stroke-dasharray="25.4 4" stroke-dashoffset="27.4"/>
<path d="M1342,1892 L1356.5,1900 L1342,1908 Z" fill="#7b7b7b"/>
<circle cx="1524" cy="86" r="12" fill="#ed6a5e"/>
<circle cx="1524" cy="86" r="4" fill="#8e1c12"/>
<circle cx="1564" cy="86" r="12" fill="#f5bf4f"/>
<circle cx="1604" cy="86" r="12" fill="#61c554"/>
<path d="M2077.5,70 H2092 L2099,77 V98 H2077.5 Z" fill="#9c9c9c"/><path d="M2092,70 V77 H2099" fill="#bdbdbd"/>
<text x="2079" y="87" font-size="9" font-weight="bold" fill="#3a3a3a" textLength="18" lengthAdjust="spacingAndGlyphs">MAX</text><path d="M2085,86 L2088,79 L2091,86 Z" fill="none" stroke="#c0304a" stroke-width="1.4"/>
<text x="2112" y="93.5" font-size="28" fill="#a6a6a6" font-weight="bold" textLength="297" lengthAdjust="spacingAndGlyphs" >Water [192] (unlocked)</text>
<rect x="1515.5" y="133.5" width="29" height="29" fill="none" stroke="#e8e8e8" stroke-width="3"/>
<rect x="1524" y="132" width="3" height="32" fill="#e8e8e8"/>
<rect x="1518" y="137.0" width="4" height="4" fill="#e8e8e8"/>
<rect x="1518" y="143.5" width="4" height="4" fill="#e8e8e8"/>
<rect x="1518" y="150.0" width="4" height="4" fill="#e8e8e8"/>
<rect x="1518" y="156.5" width="4" height="4" fill="#e8e8e8"/>
<text x="1581" y="157" font-size="24" fill="#e8e8e8" font-weight="bold" textLength="54" lengthAdjust="spacingAndGlyphs" >100%</text>
<path d="M1646,143 L1658,143 L1652,153 Z" fill="#e8e8e8"/>
<rect x="1709" y="132" width="3" height="32" fill="#e8e8e8"/>
<rect x="1714" y="132" width="27" height="3" fill="#e8e8e8"/><rect x="1714" y="137" width="27" height="2" fill="#e8e8e8"/>
<rect x="1714" y="157" width="27" height="2" fill="#e8e8e8"/><rect x="1714" y="161" width="27" height="3" fill="#e8e8e8"/>
<rect x="1739" y="137" width="1.5" height="22" fill="#e8e8e8" opacity="0.5"/>
<path d="M1798,133.5 H1774 A5,5 0 0 0 1769.5,138 V158 A5,5 0 0 0 1774,162.5 H1798" fill="none" stroke="#e8e8e8" stroke-width="3"/>
<text x="1777" y="154" font-size="20" font-style="italic" font-weight="bold" font-family="Liberation Serif" fill="#e8e8e8">m</text>
<path d="M1825,138 H1857 V156 H1851 V164 L1843,156 H1825 Z" fill="#e8e8e8"/>
<rect x="1884.5" y="133.5" width="29" height="29" fill="none" stroke="#e8e8e8" stroke-width="3"/>
<path d="M1891,140 L1907,156 M1907,140 L1891,156" stroke="#e8e8e8" stroke-width="2.5"/>
<rect x="1942.5" y="133.5" width="29" height="29" fill="none" stroke="#e8e8e8" stroke-width="3"/>
<circle cx="1957" cy="148" r="7.5" fill="none" stroke="#e8e8e8" stroke-width="2.5"/>
<path d="M1950,171 L1964,171 L1957,178 Z" fill="#e8e8e8"/>
<rect x="2000.5" y="133.5" width="29" height="29" fill="none" stroke="#e8e8e8" stroke-width="3"/>
<path d="M2009,141 L2021,148 L2009,155 Z" fill="#e8e8e8"/>
<path d="M2008,171 L2022,171 L2015,178 Z" fill="#e8e8e8"/>
<rect x="2058.5" y="133.5" width="29" height="29" fill="none" stroke="#e8e8e8" stroke-width="3"/>
<rect x="2062" y="146.5" width="22" height="3" fill="#e8e8e8"/>
<path d="M2066,171 L2080,171 L2073,178 Z" fill="#e8e8e8"/>
<path d="M2123,162 A14.5,14.5 0 1 1 2139,162" fill="none" stroke="#e8e8e8" stroke-width="3.2"/>
<path d="M2129.5,149 L2135,139" stroke="#e8e8e8" stroke-width="3.2"/>
<path d="M2124,171 L2138,171 L2131,178 Z" fill="#e8e8e8"/>
<rect x="2178" y="145.5" width="23" height="5" fill="#e8e8e8"/><rect x="2187" y="137" width="5" height="22" fill="#e8e8e8"/>
<path d="M2182.5,171 L2196.5,171 L2189.5,178 Z" fill="#e8e8e8"/>
<path d="M2265,147 L2280,134 L2293,147 L2278,163 Z" fill="none" stroke="#e8e8e8" stroke-width="2.2"/>
<path d="M2265,147 L2289,143 L2293,147 L2278,163 Z" fill="#e8e8e8"/>
<path d="M2274,133 L2280,138" stroke="#e8e8e8" stroke-width="2"/>
<path d="M2296,148 C2293,153 2293,157 2296,157 C2299,157 2299,153 2296,148 Z" fill="#e8e8e8"/>
<rect x="2408.0" y="130.0" width="4.1" height="6" fill="#e8e8e8"/>
<rect x="2414.0" y="130.0" width="4.1" height="6" fill="#e8e8e8"/>
<rect x="2420.0" y="130.0" width="4.1" height="6" fill="#e8e8e8"/>
<rect x="2426.0" y="130.0" width="4.1" height="6" fill="#e8e8e8"/>
<rect x="2432.0" y="130.0" width="4.1" height="6" fill="#e8e8e8"/>
<rect x="2438.0" y="130.0" width="4.1" height="6" fill="#e8e8e8"/>
<rect x="2402.0" y="138.05" width="4.1" height="6" fill="#e8e8e8"/>
<rect x="2408.0" y="138.05" width="4.1" height="6" fill="#e8e8e8"/>
<rect x="2414.0" y="138.05" width="4.1" height="6" fill="#e8e8e8"/>
<rect x="2420.0" y="138.05" width="4.1" height="6" fill="#e8e8e8"/>
<rect x="2426.0" y="138.05" width="4.1" height="6" fill="#e8e8e8"/>
<rect x="2432.0" y="138.05" width="4.1" height="6" fill="#e8e8e8"/>
<rect x="2438.0" y="138.05" width="4.1" height="6" fill="#e8e8e8"/>
<rect x="2402.0" y="146.1" width="4.1" height="6" fill="#e8e8e8"/>
<rect x="2408.0" y="146.1" width="4.1" height="6" fill="#e8e8e8"/>
<rect x="2414.0" y="146.1" width="4.1" height="6" fill="#e8e8e8"/>
<rect x="2420.0" y="146.1" width="4.1" height="6" fill="#e8e8e8"/>
<rect x="2426.0" y="146.1" width="4.1" height="6" fill="#e8e8e8"/>
<rect x="2432.0" y="146.1" width="4.1" height="6" fill="#e8e8e8"/>
<rect x="2438.0" y="146.1" width="4.1" height="6" fill="#e8e8e8"/>
<rect x="2402.0" y="154.15" width="4.1" height="6" fill="#e8e8e8"/>
<rect x="2408.0" y="154.15" width="4.1" height="6" fill="#e8e8e8"/>
<rect x="2414.0" y="154.15" width="4.1" height="6" fill="#e2a93a"/>
<rect x="2420.0" y="154.15" width="4.1" height="6" fill="#e8e8e8"/>
<rect x="2426.0" y="154.15" width="4.1" height="6" fill="#e8e8e8"/>
<rect x="2432.0" y="154.15" width="4.1" height="6" fill="#e8e8e8"/>
<rect x="2438.0" y="154.15" width="4.1" height="6" fill="#e8e8e8"/>
<rect x="2402.0" y="162.2" width="4.1" height="6" fill="#e8e8e8"/>
<rect x="2408.0" y="162.2" width="4.1" height="6" fill="#e8e8e8"/>
<rect x="2414.0" y="162.2" width="4.1" height="6" fill="#e8e8e8"/>
<rect x="1514" y="595" width="32" height="5" fill="#e6e6e6"/>
<rect x="1514" y="606" width="32" height="5" fill="#e6e6e6"/>
<rect x="1514" y="618" width="32" height="5" fill="#e6e6e6"/>
<rect x="1515" y="731" width="30" height="19" fill="none" stroke="#e6e6e6" stroke-width="2.5"/>
<rect x="1518" y="735" width="24" height="2" fill="#e6e6e6"/><rect x="1518" y="744" width="24" height="2" fill="#e6e6e6"/>
<circle cx="1520" cy="729" r="2.5" fill="#e6e6e6"/><circle cx="1520" cy="751" r="2.5" fill="#e6e6e6"/><circle cx="1540" cy="751" r="2.5" fill="#e6e6e6"/>
<rect x="1515.0" y="810.5" width="3" height="8" fill="#e6e6e6"/>
<rect x="1519.5" y="806.5" width="3" height="16" fill="#e6e6e6"/>
<rect x="1524.0" y="799.5" width="3" height="30" fill="#e6e6e6"/>
<rect x="1528.5" y="803.5" width="3" height="22" fill="#e6e6e6"/>
<rect x="1533.0" y="808.5" width="3" height="12" fill="#e6e6e6"/>
<rect x="1537.5" y="806.5" width="3" height="16" fill="#e6e6e6"/>
<rect x="1542.0" y="811.5" width="3" height="6" fill="#e6e6e6"/>
<rect x="1515" y="873" width="5" height="5" fill="#e6e6e6"/><rect x="1540" y="873" width="5" height="5" fill="#e6e6e6"/>
<rect x="1515" y="882" width="5" height="5" fill="#e6e6e6"/><rect x="1540" y="882" width="5" height="5" fill="#e6e6e6"/>
<rect x="1515" y="891" width="5" height="5" fill="#e6e6e6"/><rect x="1540" y="891" width="5" height="5" fill="#e6e6e6"/>
<rect x="1515" y="900" width="5" height="5" fill="#e6e6e6"/><rect x="1540" y="900" width="5" height="5" fill="#e6e6e6"/>
<path d="M1525,877 L1536,888.5 L1525,900 Z" fill="#e6e6e6"/>
<rect x="1515.25" y="947.5" width="29.5" height="29.5" fill="none" stroke="#e6e6e6" stroke-width="2.5"/>
<circle cx="1522" cy="954" r="2.8" fill="#e6e6e6"/>
<path d="M1518,974 L1525,963 L1530,969 L1537,956 L1542,965 V974 Z" fill="#e6e6e6"/>
<path d="M1541,1034 L1527,1021 A6,6 0 0 0 1518,1030 L1534,1049 A5,5 0 0 0 1542,1042 L1528,1027" fill="none" stroke="#e6e6e6" stroke-width="2.8" stroke-linecap="round"/>
<path d="M1536,1095 A16,16 0 0 0 1536,1127 Z" fill="#e6e6e6"/>
<rect x="1514" y="1107.5" width="8" height="7" fill="#e6e6e6"/>
<rect x="1534" y="1100" width="12" height="5" fill="#e6e6e6"/><rect x="1534" y="1117" width="12" height="5" fill="#e6e6e6"/>
<rect x="1515.5" y="1177" width="29" height="16" rx="5" fill="none" stroke="#e6e6e6" stroke-width="3"/>
<rect x="1521" y="1171" width="4" height="6" fill="#e6e6e6"/><rect x="1535" y="1171" width="4" height="6" fill="#e6e6e6"/>
<rect x="1521" y="1193" width="4" height="6" fill="#e6e6e6"/><rect x="1535" y="1193" width="4" height="6" fill="#e6e6e6"/>
<rect x="1515.5" y="1245" width="29" height="29" rx="7" fill="none" stroke="#e6e6e6" stroke-width="2.5"/>
<rect x="1522" y="1251.5" width="16" height="16" rx="2.5" fill="none" stroke="#e6e6e6" stroke-width="2.5"/>
<path d="M1530.0,1392.0 L1534.2,1403.2 L1546.2,1403.7 L1536.8,1411.2 L1540.0,1422.8 L1530.0,1416.1 L1520.0,1422.8 L1523.2,1411.2 L1513.8,1403.7 L1525.8,1403.2 Z" fill="#e6e6e6"/>
<circle cx="2479" cy="569" r="9.5" fill="none" stroke="#e6e6e6" stroke-width="3.5"/>
<path d="M2486,576 L2495,585" stroke="#e6e6e6" stroke-width="4" stroke-linecap="round"/>
<circle cx="2482" cy="664" r="16" fill="#e6e6e6"/>
<text x="2476" y="676" font-size="29" font-weight="bold" font-style="italic" font-family="Liberation Serif" fill="#1f1f1f">i</text>
<rect x="2466" y="744" width="15" height="26" fill="#e6e6e6"/><rect x="2483" y="744" width="15" height="26" fill="#e6e6e6"/>
<rect x="2466" y="835" width="4.5" height="3.5" fill="#4aa0ee"/><rect x="2474" y="835" width="24" height="3.5" fill="#4aa0ee"/>
<rect x="2466" y="841" width="4.5" height="3.5" fill="#4aa0ee"/><rect x="2474" y="841" width="24" height="3.5" fill="#4aa0ee"/>
<rect x="2466" y="847" width="4.5" height="3.5" fill="#4aa0ee"/><rect x="2474" y="847" width="24" height="3.5" fill="#4aa0ee"/>
<rect x="2466" y="853" width="4.5" height="3.5" fill="#4aa0ee"/><rect x="2474" y="853" width="24" height="3.5" fill="#4aa0ee"/>
<rect x="2466" y="859" width="4.5" height="3.5" fill="#4aa0ee"/><rect x="2474" y="859" width="24" height="3.5" fill="#4aa0ee"/>
<path d="M2473,999 V995.5 A2.5,2.5 0 0 1 2475.5,993 H2488.5 A2.5,2.5 0 0 1 2491,995.5 V999 H2495 A3,3 0 0 1 2498,1002 V1022 A3,3 0 0 1 2495,1025 H2469 A3,3 0 0 1 2466,1022 V1002 A3,3 0 0 1 2469,999 Z" fill="#e6e6e6"/>
<circle cx="2485.7" cy="1012" r="6.5" fill="none" stroke="#1f1f1f" stroke-width="4"/>
<rect x="2469" y="1002.3000000000001" width="5" height="2.6" fill="#111"/>
<rect x="2469" y="1007.9000000000001" width="5" height="2.6" fill="#111"/>
<rect x="2469" y="1013.5" width="5" height="2.6" fill="#111"/>
<rect x="2469" y="1019.1" width="5" height="2.6" fill="#111"/>
<rect x="2468.5" y="1086" width="3" height="29" fill="#e6e6e6"/><circle cx="2470" cy="1102" r="5" fill="#e6e6e6"/>
<rect x="2480.5" y="1086" width="3" height="29" fill="#e6e6e6"/><circle cx="2482" cy="1094" r="5" fill="#e6e6e6"/>
<rect x="2492.5" y="1086" width="3" height="29" fill="#e6e6e6"/><circle cx="2494" cy="1106" r="5" fill="#e6e6e6"/>
<circle cx="2482" cy="1561" r="15" fill="#e6e6e6"/><circle cx="2482" cy="1561" r="4" fill="#1f1f1f"/>
<text x="2482" y="1628" font-size="22" fill="#6e6e6e" text-anchor="middle" textLength="31" lengthAdjust="spacingAndGlyphs" >0%</text>
<rect x="2464" y="1646" width="14" height="48" fill="#6a6a6a"/>
<rect x="2464" y="1695" width="14" height="5.5" fill="#6a6a6a"/>
<rect x="2464" y="1703" width="14" height="5.5" fill="#6a6a6a"/>
<rect x="2464" y="1711" width="14" height="5.5" fill="#6a6a6a"/>
<rect x="2464" y="1719" width="14" height="5.5" fill="#6a6a6a"/>
<rect x="2464" y="1727" width="14" height="5.5" fill="#6a6a6a"/>
<rect x="2464" y="1735" width="14" height="5.5" fill="#6a6a6a"/>
<rect x="2464" y="1743" width="14" height="5.5" fill="#6a6a6a"/>
<rect x="2464" y="1751" width="14" height="5.5" fill="#6a6a6a"/>
<rect x="2464" y="1759" width="14" height="5.5" fill="#6a6a6a"/>
<rect x="2464" y="1767" width="14" height="5.5" fill="#6a6a6a"/>
<rect x="2464" y="1775" width="14" height="5.5" fill="#6a6a6a"/>
<rect x="2464" y="1783" width="14" height="5.5" fill="#6a6a6a"/>
<rect x="2464" y="1791" width="14" height="5.5" fill="#6a6a6a"/>
<rect x="2464" y="1799" width="14" height="5.5" fill="#6a6a6a"/>
<rect x="2464" y="1807" width="14" height="5.5" fill="#6a6a6a"/>
<rect x="2464" y="1815" width="14" height="5.5" fill="#6a6a6a"/>
<rect x="2464" y="1823" width="14" height="5.5" fill="#6a6a6a"/>
<rect x="2464" y="1831" width="14" height="5.5" fill="#6a6a6a"/>
<rect x="2464" y="1839" width="14" height="5.5" fill="#6a6a6a"/>
<rect x="2464" y="1847" width="14" height="5.5" fill="#6a6a6a"/>
<rect x="2464" y="1855" width="14" height="5.5" fill="#6a6a6a"/>
<rect x="2486" y="1646" width="14" height="48" fill="#6a6a6a"/>
<rect x="2486" y="1695" width="14" height="5.5" fill="#6a6a6a"/>
<rect x="2486" y="1703" width="14" height="5.5" fill="#6a6a6a"/>
<rect x="2486" y="1711" width="14" height="5.5" fill="#6a6a6a"/>
<rect x="2486" y="1719" width="14" height="5.5" fill="#6a6a6a"/>
<rect x="2486" y="1727" width="14" height="5.5" fill="#6a6a6a"/>
<rect x="2486" y="1735" width="14" height="5.5" fill="#6a6a6a"/>
<rect x="2486" y="1743" width="14" height="5.5" fill="#6a6a6a"/>
<rect x="2486" y="1751" width="14" height="5.5" fill="#6a6a6a"/>
<rect x="2486" y="1759" width="14" height="5.5" fill="#6a6a6a"/>
<rect x="2486" y="1767" width="14" height="5.5" fill="#6a6a6a"/>
<rect x="2486" y="1775" width="14" height="5.5" fill="#6a6a6a"/>
<rect x="2486" y="1783" width="14" height="5.5" fill="#6a6a6a"/>
<rect x="2486" y="1791" width="14" height="5.5" fill="#6a6a6a"/>
<rect x="2486" y="1799" width="14" height="5.5" fill="#6a6a6a"/>
<rect x="2486" y="1807" width="14" height="5.5" fill="#6a6a6a"/>
<rect x="2486" y="1815" width="14" height="5.5" fill="#6a6a6a"/>
<rect x="2486" y="1823" width="14" height="5.5" fill="#6a6a6a"/>
<rect x="2486" y="1831" width="14" height="5.5" fill="#6a6a6a"/>
<rect x="2486" y="1839" width="14" height="5.5" fill="#6a6a6a"/>
<rect x="2486" y="1847" width="14" height="5.5" fill="#6a6a6a"/>
<rect x="2486" y="1855" width="14" height="5.5" fill="#6a6a6a"/>
<circle cx="2487" cy="1704" r="10" fill="#333" opacity="0.7"/>
<circle cx="2482" cy="1700" r="10.5" fill="#e6e6e6"/>
<path d="M2473,1894 A12,12 0 1 0 2491,1894" fill="none" stroke="#e6e6e6" stroke-width="4.2" stroke-linecap="round"/>
<path d="M2482,1885.5 V1902.5" stroke="#e6e6e6" stroke-width="4.2" stroke-linecap="round"/>
<path d="M1515.6,1897.5 V1894 A6.4,6.4 0 0 1 1528.4,1894 V1899" fill="none" stroke="#e6e6e6" stroke-width="3.2" stroke-linecap="round"/>
<rect x="1524" y="1898" width="22" height="16" rx="2.5" fill="#e6e6e6"/><circle cx="1535" cy="1904" r="2.8" fill="#1a1a1a"/><rect x="1533.8" y="1904" width="2.6" height="7" fill="#1a1a1a"/>
<path d="M1593.5,1913.5 H1579 V1886 H1607 V1902" fill="none" stroke="#e6e6e6" stroke-width="4.2"/>
<path d="M1592,1895 L1606.5,1907 L1600.5,1908 L1605.5,1915 L1603,1917 L1598,1910 L1594.5,1914 Z" fill="#e6e6e6"/>
<rect x="1657" y="1884" width="22" height="22" fill="#e6e6e6"/><path d="M1685.5,1884 V1912.5 H1657" fill="none" stroke="#e6e6e6" stroke-width="6.5"/>
<rect x="1735" y="1884" width="32" height="20.5" rx="1" fill="#e6e6e6"/><path d="M1751,1904 L1740,1914 M1751,1904 L1762,1914" stroke="#e6e6e6" stroke-width="3.5" stroke-linecap="round"/>
<rect x="1815" y="1887" width="22" height="17.5" fill="#e6e6e6"/><rect x="1824" y="1895.5" width="23.5" height="18.5" fill="#e6e6e6" stroke="#1f1f1f" stroke-width="2.5"/>
<rect x="1895" y="1888" width="3" height="22" fill="#aaaaaa"/>
<rect x="1897" y="1868" width="458" height="66" rx="33" fill="#2a2a2a"/>
<path d="M1928,1906 L1935,1899 L1942,1906" fill="none" stroke="#e6e6e6" stroke-width="2.8"/>
<text x="1952" y="1910" font-size="25" stroke-width="0.5" textLength="359" lengthAdjust="spacingAndGlyphs"><tspan fill="#e6e6e6" stroke="#e6e6e6" font-weight="bold">p:</tspan><tspan fill="#e6e6e6" stroke="#e6e6e6"> Create a subpatch within a patch</tspan></text>
<circle cx="2391" cy="1900" r="18.7" fill="none" stroke="#7a7a7a" stroke-width="6.5" stroke-dasharray="25.4 4" stroke-dashoffset="27.4"/>
<path d="M2386,1892 L2400.5,1900 L2386,1908 Z" fill="#e6e6e6"/>
<rect x="2516" y="115" width="6" height="1817" fill="#262626"/>
<rect x="2522" y="115" width="468" height="67" fill="#1f1f1f"/>
<text x="2538" y="159" font-size="25" fill="#ececec" font-weight="bold" textLength="47" lengthAdjust="spacingAndGlyphs" >max</text>
<path d="M2627,132 L2643,148 L2627,164 L2611,148 Z" fill="#ececec"/>
<text x="2627" y="156" font-size="20" fill="#1f1f1f" font-weight="bold" text-anchor="middle" >P</text>
<rect x="2666" y="130" width="212" height="36" rx="18" fill="#2b2b2b"/>
<circle cx="2684" cy="146" r="7.5" fill="none" stroke="#ececec" stroke-width="3"/><path d="M2689,151 L2697,159" stroke="#ececec" stroke-width="3.5" stroke-linecap="round"/>
<text x="2708" y="157" font-size="24" fill="#8a8a8a" textLength="53" lengthAdjust="spacingAndGlyphs" >Filter</text>
<rect x="2906" y="145.5" width="23" height="5" fill="#ececec"/><rect x="2915" y="137" width="5" height="22" fill="#ececec"/>
<rect x="2522" y="182" width="468" height="40" fill="#7e4637"/>
<text x="2541" y="210" font-size="24" stroke-width="0.45" textLength="425" lengthAdjust="spacingAndGlyphs"><tspan fill="#ececec" stroke="#ececec" font-weight="bold">jit.pwindow</tspan><tspan fill="#ececec" stroke="#ececec"> • doesn't understand &quot;float&quot;</tspan></text>
<rect x="2522" y="222" width="468" height="40" fill="#4e312a"/>
<text x="2541" y="250" font-size="24" stroke-width="0.45" textLength="425" lengthAdjust="spacingAndGlyphs"><tspan fill="#ececec" stroke="#ececec" font-weight="bold">jit.pwindow</tspan><tspan fill="#ececec" stroke="#ececec"> • doesn't understand &quot;float&quot;</tspan></text>
<rect x="2522" y="262" width="468" height="40" fill="#7e4637"/>
<text x="2541" y="290" font-size="24" stroke-width="0.45" textLength="425" lengthAdjust="spacingAndGlyphs"><tspan fill="#ececec" stroke="#ececec" font-weight="bold">jit.pwindow</tspan><tspan fill="#ececec" stroke="#ececec"> • doesn't understand &quot;float&quot;</tspan></text>
<rect x="2522" y="302" width="468" height="40" fill="#4e312a"/>
<text x="2541" y="330" font-size="24" stroke-width="0.45" textLength="425" lengthAdjust="spacingAndGlyphs"><tspan fill="#ececec" stroke="#ececec" font-weight="bold">jit.pwindow</tspan><tspan fill="#ececec" stroke="#ececec"> • doesn't understand &quot;float&quot;</tspan></text>
<rect x="2522" y="342" width="468" height="40" fill="#7e4637"/>
<text x="2541" y="370" font-size="24" stroke-width="0.45" textLength="425" lengthAdjust="spacingAndGlyphs"><tspan fill="#ececec" stroke="#ececec" font-weight="bold">jit.pwindow</tspan><tspan fill="#ececec" stroke="#ececec"> • doesn't understand &quot;float&quot;</tspan></text>
<rect x="2522" y="382" width="468" height="40" fill="#4e312a"/>
<text x="2541" y="410" font-size="24" stroke-width="0.45" textLength="425" lengthAdjust="spacingAndGlyphs"><tspan fill="#ececec" stroke="#ececec" font-weight="bold">jit.pwindow</tspan><tspan fill="#ececec" stroke="#ececec"> • doesn't understand &quot;float&quot;</tspan></text>
<rect x="2522" y="422" width="468" height="40" fill="#7e4637"/>
<text x="2541" y="450" font-size="24" stroke-width="0.45" textLength="425" lengthAdjust="spacingAndGlyphs"><tspan fill="#ececec" stroke="#ececec" font-weight="bold">jit.pwindow</tspan><tspan fill="#ececec" stroke="#ececec"> • doesn't understand &quot;float&quot;</tspan></text>
<rect x="2522" y="462" width="468" height="40" fill="#4e312a"/>
<text x="2541" y="490" font-size="24" stroke-width="0.45" textLength="425" lengthAdjust="spacingAndGlyphs"><tspan fill="#ececec" stroke="#ececec" font-weight="bold">jit.pwindow</tspan><tspan fill="#ececec" stroke="#ececec"> • doesn't understand &quot;float&quot;</tspan></text>
<rect x="2522" y="502" width="468" height="40" fill="#333333"/>
<rect x="2522" y="542" width="468" height="40" fill="#272727"/>
<rect x="2522" y="582" width="468" height="40" fill="#333333"/>
<rect x="2522" y="622" width="468" height="40" fill="#272727"/>
<rect x="2522" y="662" width="468" height="40" fill="#333333"/>
<rect x="2522" y="702" width="468" height="40" fill="#272727"/>
<rect x="2522" y="742" width="468" height="40" fill="#333333"/>
<rect x="2522" y="782" width="468" height="40" fill="#272727"/>
<rect x="2522" y="822" width="468" height="40" fill="#333333"/>
<rect x="2522" y="862" width="468" height="40" fill="#272727"/>
<rect x="2522" y="902" width="468" height="40" fill="#333333"/>
<rect x="2522" y="942" width="468" height="40" fill="#272727"/>
<rect x="2522" y="982" width="468" height="40" fill="#333333"/>
<rect x="2522" y="1022" width="468" height="40" fill="#272727"/>
<rect x="2522" y="1062" width="468" height="40" fill="#333333"/>
<rect x="2522" y="1102" width="468" height="40" fill="#272727"/>
<rect x="2522" y="1142" width="468" height="40" fill="#333333"/>
<rect x="2522" y="1182" width="468" height="40" fill="#272727"/>
<rect x="2522" y="1222" width="468" height="40" fill="#333333"/>
<rect x="2522" y="1262" width="468" height="40" fill="#272727"/>
<rect x="2522" y="1302" width="468" height="40" fill="#333333"/>
<rect x="2522" y="1342" width="468" height="40" fill="#272727"/>
<rect x="2522" y="1382" width="468" height="40" fill="#333333"/>
<rect x="2522" y="1422" width="468" height="40" fill="#272727"/>
<rect x="2522" y="1462" width="468" height="40" fill="#333333"/>
<rect x="2522" y="1502" width="468" height="40" fill="#272727"/>
<rect x="2522" y="1542" width="468" height="40" fill="#333333"/>
<rect x="2522" y="1582" width="468" height="40" fill="#272727"/>
<rect x="2522" y="1622" width="468" height="40" fill="#333333"/>
<rect x="2522" y="1662" width="468" height="40" fill="#272727"/>
<rect x="2522" y="1702" width="468" height="40" fill="#333333"/>
<rect x="2522" y="1742" width="468" height="40" fill="#1f1f1f"/>
<rect x="2522" y="1782" width="468" height="40" fill="#1f1f1f"/>
<rect x="2522" y="1822" width="468" height="40" fill="#1f1f1f"/>
<rect x="2522" y="1862" width="468" height="4" fill="#1f1f1f"/>
<rect x="2532" y="1751" width="450" height="105" rx="14" fill="#1f1f1f" stroke="#a9a9a9" stroke-width="2"/>
<text x="2556" y="1789" font-size="24" fill="#e6e6e6" font-weight="bold" textLength="45" lengthAdjust="spacingAndGlyphs" >man</text>
<text x="2637" y="1789" font-size="24" fill="#e6e6e6" font-weight="bold" textLength="13" lengthAdjust="spacingAndGlyphs" >?</text>
<text x="2682" y="1789" font-size="24" fill="#e6e6e6" font-weight="bold" textLength="44" lengthAdjust="spacingAndGlyphs" >max</text>
<text x="2760" y="1789" font-size="24" fill="#e6e6e6" font-weight="bold" textLength="22" lengthAdjust="spacingAndGlyphs" >js</text>
<text x="2812" y="1789" font-size="24" fill="#e6e6e6" font-weight="bold" textLength="14" lengthAdjust="spacingAndGlyphs" >_</text>
<text x="2858" y="1789" font-size="24" fill="#e6e6e6" font-weight="bold" textLength="40" lengthAdjust="spacingAndGlyphs" >&lt;p&gt;</text>
<text x="2934" y="1789" font-size="24" fill="#e6e6e6" font-weight="bold" textLength="14" lengthAdjust="spacingAndGlyphs" >+</text>
<rect x="2619" y="1767" width="2.4" height="24" fill="#e6e6e6"/>
<rect x="2665" y="1767" width="2.4" height="24" fill="#e6e6e6"/>
<rect x="2743" y="1767" width="2.4" height="24" fill="#e6e6e6"/>
<rect x="2794" y="1767" width="2.4" height="24" fill="#e6e6e6"/>
<rect x="2840" y="1767" width="2.4" height="24" fill="#e6e6e6"/>
<rect x="2916" y="1767" width="2.4" height="24" fill="#e6e6e6"/>
<path d="M2545,1819 L2558,1826 L2545,1833" fill="none" stroke="#e6e6e6" stroke-width="3"/>
<rect x="2522" y="1866" width="468" height="66" fill="#1f1f1f"/>
<path d="M2545,1887 L2571,1913 M2571,1887 L2545,1913" stroke="#e6e6e6" stroke-width="6"/>
<path d="M2646,1885 L2660,1900 L2646,1914 M2662,1913 H2677" fill="none" stroke="#e2a33a" stroke-width="3.2" stroke-linecap="round"/>
<circle cx="2727" cy="1900" r="16" fill="#e6e6e6"/><path d="M2727,1889 V1901 L2734,1907" fill="none" stroke="#1f1f1f" stroke-width="3" stroke-linecap="round"/>
<path d="M2793,1884 L2809,1915 H2777 Z" fill="#e6e6e6"/><path d="M2790,1893 H2796 L2793,1903 Z" fill="#1f1f1f"/><circle cx="2793" cy="1909" r="2.5" fill="#1f1f1f"/>
<rect x="2851" y="1884" width="16" height="5" fill="#e2a33a"/><rect x="2851" y="1892" width="16" height="6" fill="#e2a33a"/><path d="M2845,1901 H2873 L2859,1916 Z" fill="#e2a33a"/>
<path d="M2944,1900 L2956,1888 V1895 H2975 V1906 H2956 V1913 Z" fill="#6e6e6e"/>
<path d="M0,1909 V1934 H23 V1932 A23,23 0 0 1 0,1909 Z" fill="#0f1115"/>
<path d="M1484,1909 V1934 H1461 V1932 A23,23 0 0 0 1484,1909 Z" fill="#0f1115"/>
<path d="M0.75,1909 A22.25,22.25 0 0 0 23,1932.25 H1461 A22.25,22.25 0 0 0 1483.25,1909" fill="none" stroke="#505050" stroke-width="2"/>
<path d="M1496,1909 V1934 H1519 V1932 A23,23 0 0 1 1496,1909 Z" fill="#0f1115"/>
<path d="M2991,1909 V1934 H2968 V1932 A23,23 0 0 0 2991,1909 Z" fill="#0f1115"/>
<path d="M1496.75,1909 A22.25,22.25 0 0 0 1519,1932.25 H2968 A22.25,22.25 0 0 0 2990.25,1909" fill="none" stroke="#505050" stroke-width="2"/>
<rect x="0" y="1933" width="2992" height="1" fill="#4a4a4a"/>
</svg></body></html>
